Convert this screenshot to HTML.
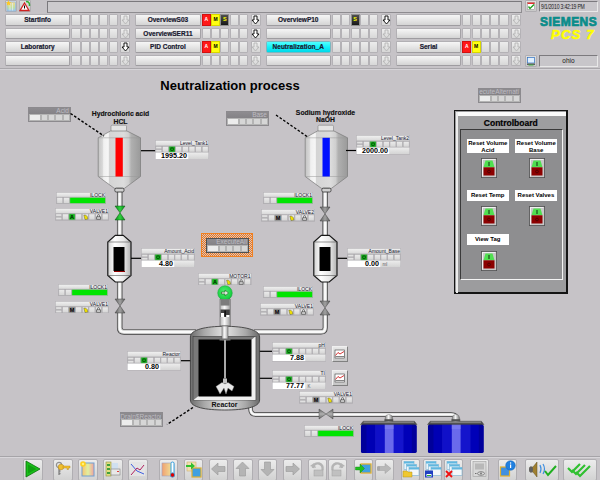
<!DOCTYPE html><html><head><meta charset="utf-8"><style>
*{margin:0;padding:0;box-sizing:border-box}
html,body{width:600px;height:480px;overflow:hidden;background:#c6c3c7;font-family:"Liberation Sans",sans-serif}
div{position:absolute}
svg{position:absolute}
.btn{background:linear-gradient(#f6f6f6,#e6e6e6 50%,#d4d4d4);border:1px solid #b2b0b4;border-bottom-color:#9e9ca0;border-right-color:#a4a2a6;border-radius:1.5px;font-weight:bold;font-size:6.5px;color:#1a1a30;-webkit-text-stroke:0.2px #1a1a30;text-align:center;line-height:9.5px;white-space:nowrap}
.sb{background:linear-gradient(#ececec,#d8d8d8);border:1px solid #b4b2b6;border-radius:1px}
.ar{background:linear-gradient(#eeeeee,#d6d6d6);border:1px solid #b4b2b6;border-radius:1px}
.t{white-space:nowrap}
.c{background:linear-gradient(#e4e4e4,#d8d8d8);border:1px solid #acaaae}
.tb{background:linear-gradient(#ececec,#d2d2d2);border:1px solid #b0aeb2;border-radius:2px}
</style></head><body>
<div style="left:5px;top:0px;width:12px;height:12px;background:linear-gradient(#dedede,#c8c8c8);border:1px solid #b0aeb2;border-radius:1px"></div>
<svg style="position:absolute;left:5px;top:0px" width="12" height="12" viewBox="0 0 12 12"><defs><linearGradient id="ib" x1="0" y1="0" x2="0" y2="1"><stop offset="0" stop-color="#f8d890"/><stop offset="0.6" stop-color="#c0e0a0"/><stop offset="1" stop-color="#a0c8f0"/></linearGradient></defs><rect x="2" y="2" width="8.5" height="9" fill="url(#ib)" stroke="#90b8e0" stroke-width="0.7"/><rect x="4.5" y="3" width="1" height="7.5" fill="#e8f0f0" opacity="0.7"/><rect x="7" y="3" width="1" height="7.5" fill="#e8f0f0" opacity="0.7"/><path d="M3.5 0.3 L4.3 2.2 L6.3 2.3 L4.8 3.5 L5.3 5.5 L3.5 4.4 L1.7 5.5 L2.2 3.5 L0.7 2.3 L2.7 2.2 Z" fill="#ffc820"/></svg>
<div style="left:19px;top:0px;width:12px;height:12px;background:linear-gradient(#dedede,#c8c8c8);border:1px solid #b0aeb2;border-radius:1px"></div>
<svg style="position:absolute;left:19px;top:0px" width="12" height="12" viewBox="0 0 12 12"><path d="M5.5 3 L10 10.5 H1 Z" fill="#fff" stroke="#d02020" stroke-width="1.3"/><rect x="5" y="5.5" width="1" height="3" fill="#000"/><path d="M7 1.5 Q11 1.5 10.5 6" stroke="#30b030" stroke-width="1.5" fill="none"/></svg>
<div style="left:47px;top:0.5px;width:474.5px;height:12px;background:#cccacd;border:1px solid #8e8c90;border-top-color:#7a787c;border-left-color:#7a787c;border-top-width:1.3px;border-left-width:1.3px"></div>
<div style="left:525px;top:0px;width:11.5px;height:12px;background:linear-gradient(#dedede,#c8c8c8);border:1px solid #b0aeb2;border-radius:1px"></div>
<svg style="position:absolute;left:525px;top:0px" width="12" height="12" viewBox="0 0 12 12"><rect x="2.5" y="2.5" width="7" height="7" fill="#fff" stroke="#888" stroke-width="0.5"/><rect x="2.5" y="2.5" width="7" height="1.5" fill="#e03030"/><path d="M3.5 6.5 L5 8.5 L9 4.5" stroke="#20a020" stroke-width="1.3" fill="none"/></svg>
<div style="left:539px;top:1px;width:59px;height:11px;background:#c8c6ca;border:1px solid #7c7a7e;border-right-color:#e8e8e8;border-bottom-color:#e8e8e8"></div>
<div class="t" style="left:540.5px;top:2.5px;font-size:6.4px;line-height:7px;color:#202020;letter-spacing:-0.25px;transform:scaleX(0.8);transform-origin:0 0">9/1/2010 3:42:19 PM</div>
<div style="left:525px;top:55px;width:11.5px;height:12px;background:linear-gradient(#dedede,#c8c8c8);border:1px solid #b0aeb2;border-radius:1px"></div>
<svg style="position:absolute;left:525px;top:55px" width="12" height="12" viewBox="0 0 12 12"><rect x="2.5" y="2.5" width="7" height="5.5" fill="#e0f0ff" stroke="#3070c0" stroke-width="0.7"/><rect x="2" y="8.5" width="8" height="1.5" fill="#606060"/><rect x="3.5" y="9.5" width="5" height="1" fill="#40b040"/></svg>
<div style="left:539px;top:55px;width:59px;height:11.5px;background:#c8c6ca;border:1px solid #7c7a7e;border-right-color:#e8e8e8;border-bottom-color:#e8e8e8;font-size:6.5px;color:#202020;line-height:9.5px;text-align:center">ohio</div>
<div class="t" style="left:540px;top:14.6px;font-size:12px;line-height:14px;font-weight:bold;color:#0a8c8a;letter-spacing:0.45px;-webkit-text-stroke:0.7px #0a8c8a">SIEMENS</div>
<div class="t" style="left:551px;top:27.3px;font-size:13.2px;line-height:15px;font-weight:bold;font-style:italic;color:#ffff00;letter-spacing:1.1px;-webkit-text-stroke:0.5px #ffff00">PCS 7</div>
<div class="btn" style="left:5.0px;top:14px;width:65.3px;height:11.5px;">StartInfo</div>
<div class="sb" style="left:71.3px;top:14px;width:9.3px;height:11.5px;"></div>
<div class="sb" style="left:80.6px;top:14px;width:9.3px;height:11.5px;"></div>
<div class="sb" style="left:89.9px;top:14px;width:9.3px;height:11.5px;"></div>
<div class="sb" style="left:99.2px;top:14px;width:9.3px;height:11.5px;"></div>
<div class="sb" style="left:108.5px;top:14px;width:9.3px;height:11.5px;"></div>
<div class="ar" style="left:120.2px;top:14px;width:10.3px;height:11.5px;"></div>
<svg style="position:absolute;left:119.9px;top:14px" width="11" height="12" viewBox="0 0 11 12"><path d="M4 2h3v4h2L5.5 10 2 6h2z" fill="none" stroke="#b4b4b4" stroke-width="0.9"/></svg>
<div class="btn" style="left:135.3px;top:14px;width:65.3px;height:11.5px;">OverviewS03</div>
<div style="left:201.60000000000002px;top:14px;width:9.3px;height:11.5px;background:#ff1818;border:1px solid #d01010;color:#fff;font-size:5px;font-weight:bold;text-align:center;line-height:9px">A</div>
<div style="left:210.9px;top:14px;width:9.3px;height:11.5px;background:#ffff10;border:1px solid #d8d800;color:#000;font-size:5px;font-weight:bold;text-align:center;line-height:9px">M</div>
<div style="left:220.20000000000002px;top:14px;width:9.3px;height:11.5px;background:linear-gradient(#505050,#181818);border:1px solid #909090;color:#ffff00;font-size:5.5px;font-weight:bold;text-align:center;line-height:9px">S</div>
<div class="sb" style="left:229.5px;top:14px;width:9.3px;height:11.5px;"></div>
<div class="sb" style="left:238.8px;top:14px;width:9.3px;height:11.5px;"></div>
<div class="ar" style="left:250.5px;top:14px;width:10.3px;height:11.5px;"></div>
<svg style="position:absolute;left:250.20000000000002px;top:14px" width="11" height="12" viewBox="0 0 11 12"><path d="M4 2h3v4h2L5.5 10 2 6h2z" fill="#fff" stroke="#000" stroke-width="0.9"/></svg>
<div class="btn" style="left:265.6px;top:14px;width:65.3px;height:11.5px;">OverviewP10</div>
<div class="sb" style="left:331.90000000000003px;top:14px;width:9.3px;height:11.5px;"></div>
<div class="sb" style="left:341.20000000000005px;top:14px;width:9.3px;height:11.5px;"></div>
<div style="left:350.5px;top:14px;width:9.3px;height:11.5px;background:linear-gradient(#505050,#181818);border:1px solid #909090;color:#ffff00;font-size:5.5px;font-weight:bold;text-align:center;line-height:9px">S</div>
<div class="sb" style="left:359.8px;top:14px;width:9.3px;height:11.5px;"></div>
<div class="sb" style="left:369.1px;top:14px;width:9.3px;height:11.5px;"></div>
<div class="ar" style="left:380.8px;top:14px;width:10.3px;height:11.5px;"></div>
<svg style="position:absolute;left:380.5px;top:14px" width="11" height="12" viewBox="0 0 11 12"><path d="M4 2h3v4h2L5.5 10 2 6h2z" fill="#fff" stroke="#000" stroke-width="0.9"/></svg>
<div class="btn" style="left:395.90000000000003px;top:14px;width:65.3px;height:11.5px;"></div>
<div class="sb" style="left:462.20000000000005px;top:14px;width:9.3px;height:11.5px;"></div>
<div class="sb" style="left:471.5px;top:14px;width:9.3px;height:11.5px;"></div>
<div class="sb" style="left:480.80000000000007px;top:14px;width:9.3px;height:11.5px;"></div>
<div class="sb" style="left:490.1px;top:14px;width:9.3px;height:11.5px;"></div>
<div class="sb" style="left:499.40000000000003px;top:14px;width:9.3px;height:11.5px;"></div>
<div class="ar" style="left:511.1px;top:14px;width:10.3px;height:11.5px;"></div>
<svg style="position:absolute;left:510.80000000000007px;top:14px" width="11" height="12" viewBox="0 0 11 12"><path d="M4 2h3v4h2L5.5 10 2 6h2z" fill="none" stroke="#b4b4b4" stroke-width="0.9"/></svg>
<div class="btn" style="left:5.0px;top:27.5px;width:65.3px;height:11.5px;"></div>
<div class="sb" style="left:71.3px;top:27.5px;width:9.3px;height:11.5px;"></div>
<div class="sb" style="left:80.6px;top:27.5px;width:9.3px;height:11.5px;"></div>
<div class="sb" style="left:89.9px;top:27.5px;width:9.3px;height:11.5px;"></div>
<div class="sb" style="left:99.2px;top:27.5px;width:9.3px;height:11.5px;"></div>
<div class="sb" style="left:108.5px;top:27.5px;width:9.3px;height:11.5px;"></div>
<div class="ar" style="left:120.2px;top:27.5px;width:10.3px;height:11.5px;"></div>
<svg style="position:absolute;left:119.9px;top:27.5px" width="11" height="12" viewBox="0 0 11 12"><path d="M4 2h3v4h2L5.5 10 2 6h2z" fill="none" stroke="#b4b4b4" stroke-width="0.9"/></svg>
<div class="btn" style="left:135.3px;top:27.5px;width:65.3px;height:11.5px;">OverviewSER11</div>
<div class="sb" style="left:201.60000000000002px;top:27.5px;width:9.3px;height:11.5px;"></div>
<div class="sb" style="left:210.9px;top:27.5px;width:9.3px;height:11.5px;"></div>
<div class="sb" style="left:220.20000000000002px;top:27.5px;width:9.3px;height:11.5px;"></div>
<div class="sb" style="left:229.5px;top:27.5px;width:9.3px;height:11.5px;"></div>
<div class="sb" style="left:238.8px;top:27.5px;width:9.3px;height:11.5px;"></div>
<div class="ar" style="left:250.5px;top:27.5px;width:10.3px;height:11.5px;"></div>
<svg style="position:absolute;left:250.20000000000002px;top:27.5px" width="11" height="12" viewBox="0 0 11 12"><path d="M4 2h3v4h2L5.5 10 2 6h2z" fill="#fff" stroke="#000" stroke-width="0.9"/></svg>
<div class="btn" style="left:265.6px;top:27.5px;width:65.3px;height:11.5px;"></div>
<div class="sb" style="left:331.90000000000003px;top:27.5px;width:9.3px;height:11.5px;"></div>
<div class="sb" style="left:341.20000000000005px;top:27.5px;width:9.3px;height:11.5px;"></div>
<div class="sb" style="left:350.5px;top:27.5px;width:9.3px;height:11.5px;"></div>
<div class="sb" style="left:359.8px;top:27.5px;width:9.3px;height:11.5px;"></div>
<div class="sb" style="left:369.1px;top:27.5px;width:9.3px;height:11.5px;"></div>
<div class="ar" style="left:380.8px;top:27.5px;width:10.3px;height:11.5px;"></div>
<svg style="position:absolute;left:380.5px;top:27.5px" width="11" height="12" viewBox="0 0 11 12"><path d="M4 2h3v4h2L5.5 10 2 6h2z" fill="none" stroke="#b4b4b4" stroke-width="0.9"/></svg>
<div class="btn" style="left:395.90000000000003px;top:27.5px;width:65.3px;height:11.5px;"></div>
<div class="sb" style="left:462.20000000000005px;top:27.5px;width:9.3px;height:11.5px;"></div>
<div class="sb" style="left:471.5px;top:27.5px;width:9.3px;height:11.5px;"></div>
<div class="sb" style="left:480.80000000000007px;top:27.5px;width:9.3px;height:11.5px;"></div>
<div class="sb" style="left:490.1px;top:27.5px;width:9.3px;height:11.5px;"></div>
<div class="sb" style="left:499.40000000000003px;top:27.5px;width:9.3px;height:11.5px;"></div>
<div class="ar" style="left:511.1px;top:27.5px;width:10.3px;height:11.5px;"></div>
<svg style="position:absolute;left:510.80000000000007px;top:27.5px" width="11" height="12" viewBox="0 0 11 12"><path d="M4 2h3v4h2L5.5 10 2 6h2z" fill="none" stroke="#b4b4b4" stroke-width="0.9"/></svg>
<div class="btn" style="left:5.0px;top:41px;width:65.3px;height:11.5px;">Laboratory</div>
<div class="sb" style="left:71.3px;top:41px;width:9.3px;height:11.5px;"></div>
<div class="sb" style="left:80.6px;top:41px;width:9.3px;height:11.5px;"></div>
<div class="sb" style="left:89.9px;top:41px;width:9.3px;height:11.5px;"></div>
<div class="sb" style="left:99.2px;top:41px;width:9.3px;height:11.5px;"></div>
<div class="sb" style="left:108.5px;top:41px;width:9.3px;height:11.5px;"></div>
<div class="ar" style="left:120.2px;top:41px;width:10.3px;height:11.5px;"></div>
<svg style="position:absolute;left:119.9px;top:41px" width="11" height="12" viewBox="0 0 11 12"><path d="M4 2h3v4h2L5.5 10 2 6h2z" fill="#fff" stroke="#000" stroke-width="0.9"/></svg>
<div class="btn" style="left:135.3px;top:41px;width:65.3px;height:11.5px;">PID Control</div>
<div style="left:201.60000000000002px;top:41px;width:9.3px;height:11.5px;background:#ff1818;border:1px solid #d01010;color:#fff;font-size:5px;font-weight:bold;text-align:center;line-height:9px">A</div>
<div style="left:210.9px;top:41px;width:9.3px;height:11.5px;background:#ffff10;border:1px solid #d8d800;color:#000;font-size:5px;font-weight:bold;text-align:center;line-height:9px">M</div>
<div class="sb" style="left:220.20000000000002px;top:41px;width:9.3px;height:11.5px;"></div>
<div class="sb" style="left:229.5px;top:41px;width:9.3px;height:11.5px;"></div>
<div class="sb" style="left:238.8px;top:41px;width:9.3px;height:11.5px;"></div>
<div class="ar" style="left:250.5px;top:41px;width:10.3px;height:11.5px;"></div>
<svg style="position:absolute;left:250.20000000000002px;top:41px" width="11" height="12" viewBox="0 0 11 12"><path d="M4 2h3v4h2L5.5 10 2 6h2z" fill="none" stroke="#b4b4b4" stroke-width="0.9"/></svg>
<div class="btn" style="left:265.6px;top:41px;width:65.3px;height:11.5px;background:linear-gradient(#50ffff,#10f0f8 55%,#00d8e8);border-color:#7ab8c0">Neutralization_A</div>
<div class="sb" style="left:331.90000000000003px;top:41px;width:9.3px;height:11.5px;"></div>
<div class="sb" style="left:341.20000000000005px;top:41px;width:9.3px;height:11.5px;"></div>
<div class="sb" style="left:350.5px;top:41px;width:9.3px;height:11.5px;"></div>
<div class="sb" style="left:359.8px;top:41px;width:9.3px;height:11.5px;"></div>
<div class="sb" style="left:369.1px;top:41px;width:9.3px;height:11.5px;"></div>
<div class="ar" style="left:380.8px;top:41px;width:10.3px;height:11.5px;"></div>
<svg style="position:absolute;left:380.5px;top:41px" width="11" height="12" viewBox="0 0 11 12"><path d="M4 2h3v4h2L5.5 10 2 6h2z" fill="none" stroke="#b4b4b4" stroke-width="0.9"/></svg>
<div class="btn" style="left:395.90000000000003px;top:41px;width:65.3px;height:11.5px;">Serial</div>
<div style="left:462.20000000000005px;top:41px;width:9.3px;height:11.5px;background:#ff1818;border:1px solid #d01010;color:#fff;font-size:5px;font-weight:bold;text-align:center;line-height:9px">A</div>
<div style="left:471.5px;top:41px;width:9.3px;height:11.5px;background:#ffff10;border:1px solid #d8d800;color:#000;font-size:5px;font-weight:bold;text-align:center;line-height:9px">M</div>
<div class="sb" style="left:480.80000000000007px;top:41px;width:9.3px;height:11.5px;"></div>
<div class="sb" style="left:490.1px;top:41px;width:9.3px;height:11.5px;"></div>
<div class="sb" style="left:499.40000000000003px;top:41px;width:9.3px;height:11.5px;"></div>
<div class="ar" style="left:511.1px;top:41px;width:10.3px;height:11.5px;"></div>
<svg style="position:absolute;left:510.80000000000007px;top:41px" width="11" height="12" viewBox="0 0 11 12"><path d="M4 2h3v4h2L5.5 10 2 6h2z" fill="none" stroke="#b4b4b4" stroke-width="0.9"/></svg>
<div class="btn" style="left:5.0px;top:54.5px;width:65.3px;height:11.5px;"></div>
<div class="sb" style="left:71.3px;top:54.5px;width:9.3px;height:11.5px;"></div>
<div class="sb" style="left:80.6px;top:54.5px;width:9.3px;height:11.5px;"></div>
<div class="sb" style="left:89.9px;top:54.5px;width:9.3px;height:11.5px;"></div>
<div class="sb" style="left:99.2px;top:54.5px;width:9.3px;height:11.5px;"></div>
<div class="sb" style="left:108.5px;top:54.5px;width:9.3px;height:11.5px;"></div>
<div class="ar" style="left:120.2px;top:54.5px;width:10.3px;height:11.5px;"></div>
<svg style="position:absolute;left:119.9px;top:54.5px" width="11" height="12" viewBox="0 0 11 12"><path d="M4 2h3v4h2L5.5 10 2 6h2z" fill="none" stroke="#b4b4b4" stroke-width="0.9"/></svg>
<div class="btn" style="left:135.3px;top:54.5px;width:65.3px;height:11.5px;"></div>
<div class="sb" style="left:201.60000000000002px;top:54.5px;width:9.3px;height:11.5px;"></div>
<div class="sb" style="left:210.9px;top:54.5px;width:9.3px;height:11.5px;"></div>
<div class="sb" style="left:220.20000000000002px;top:54.5px;width:9.3px;height:11.5px;"></div>
<div class="sb" style="left:229.5px;top:54.5px;width:9.3px;height:11.5px;"></div>
<div class="sb" style="left:238.8px;top:54.5px;width:9.3px;height:11.5px;"></div>
<div class="ar" style="left:250.5px;top:54.5px;width:10.3px;height:11.5px;"></div>
<svg style="position:absolute;left:250.20000000000002px;top:54.5px" width="11" height="12" viewBox="0 0 11 12"><path d="M4 2h3v4h2L5.5 10 2 6h2z" fill="none" stroke="#b4b4b4" stroke-width="0.9"/></svg>
<div class="btn" style="left:265.6px;top:54.5px;width:65.3px;height:11.5px;"></div>
<div class="sb" style="left:331.90000000000003px;top:54.5px;width:9.3px;height:11.5px;"></div>
<div class="sb" style="left:341.20000000000005px;top:54.5px;width:9.3px;height:11.5px;"></div>
<div class="sb" style="left:350.5px;top:54.5px;width:9.3px;height:11.5px;"></div>
<div class="sb" style="left:359.8px;top:54.5px;width:9.3px;height:11.5px;"></div>
<div class="sb" style="left:369.1px;top:54.5px;width:9.3px;height:11.5px;"></div>
<div class="ar" style="left:380.8px;top:54.5px;width:10.3px;height:11.5px;"></div>
<svg style="position:absolute;left:380.5px;top:54.5px" width="11" height="12" viewBox="0 0 11 12"><path d="M4 2h3v4h2L5.5 10 2 6h2z" fill="none" stroke="#b4b4b4" stroke-width="0.9"/></svg>
<div class="btn" style="left:395.90000000000003px;top:54.5px;width:65.3px;height:11.5px;"></div>
<div class="sb" style="left:462.20000000000005px;top:54.5px;width:9.3px;height:11.5px;"></div>
<div class="sb" style="left:471.5px;top:54.5px;width:9.3px;height:11.5px;"></div>
<div class="sb" style="left:480.80000000000007px;top:54.5px;width:9.3px;height:11.5px;"></div>
<div class="sb" style="left:490.1px;top:54.5px;width:9.3px;height:11.5px;"></div>
<div class="sb" style="left:499.40000000000003px;top:54.5px;width:9.3px;height:11.5px;"></div>
<div class="ar" style="left:511.1px;top:54.5px;width:10.3px;height:11.5px;"></div>
<svg style="position:absolute;left:510.80000000000007px;top:54.5px" width="11" height="12" viewBox="0 0 11 12"><path d="M4 2h3v4h2L5.5 10 2 6h2z" fill="none" stroke="#b4b4b4" stroke-width="0.9"/></svg>
<div style="left:0px;top:67.5px;width:600px;height:1px;background:#a9a7ab"></div>
<div style="left:0px;top:68.5px;width:600px;height:1px;background:#d6d4d8"></div>
<div class="t" style="left:160.3px;top:78px;font-size:13px;line-height:15px;font-weight:bold;color:#000">Neutralization process</div>
<svg width="0" height="0" style="position:absolute"><defs><linearGradient id="gc" x1="0" y1="0" x2="0" y2="1"><stop offset="0" stop-color="#ececec"/><stop offset="1" stop-color="#d4d4d4"/></linearGradient><linearGradient id="gt" x1="0" y1="0" x2="0" y2="1"><stop offset="0" stop-color="#f2f2f2"/><stop offset="1" stop-color="#d8d8d8"/></linearGradient></defs></svg>
<svg style="position:absolute;left:0px;top:0px" width="600" height="480" viewBox="0 0 600 480"><path d="M119.7 190 V206.5" fill="none" stroke="#3c3c3c" stroke-width="5.5" stroke-linejoin="round"/><path d="M119.7 190 V206.5" fill="none" stroke="#c8c8c8" stroke-width="4.1" stroke-linejoin="round"/><path d="M119.7 190 V206.5" fill="none" stroke="#fafafa" stroke-width="2.31" stroke-linejoin="round"/></svg>
<svg style="position:absolute;left:0px;top:0px" width="600" height="480" viewBox="0 0 600 480"><path d="M119.7 219.5 V236" fill="none" stroke="#3c3c3c" stroke-width="5.5" stroke-linejoin="round"/><path d="M119.7 219.5 V236" fill="none" stroke="#c8c8c8" stroke-width="4.1" stroke-linejoin="round"/><path d="M119.7 219.5 V236" fill="none" stroke="#fafafa" stroke-width="2.31" stroke-linejoin="round"/></svg>
<svg style="position:absolute;left:0px;top:0px" width="600" height="480" viewBox="0 0 600 480"><path d="M119.7 281 V299.5" fill="none" stroke="#3c3c3c" stroke-width="5.5" stroke-linejoin="round"/><path d="M119.7 281 V299.5" fill="none" stroke="#c8c8c8" stroke-width="4.1" stroke-linejoin="round"/><path d="M119.7 281 V299.5" fill="none" stroke="#fafafa" stroke-width="2.31" stroke-linejoin="round"/></svg>
<svg style="position:absolute;left:0px;top:0px" width="600" height="480" viewBox="0 0 600 480"><path d="M119.7 312 V327.7 Q119.7 331.9 124 331.9 H196" fill="none" stroke="#3c3c3c" stroke-width="5.5" stroke-linejoin="round"/><path d="M119.7 312 V327.7 Q119.7 331.9 124 331.9 H196" fill="none" stroke="#c8c8c8" stroke-width="4.1" stroke-linejoin="round"/><path d="M119.7 312 V327.7 Q119.7 331.9 124 331.9 H196" fill="none" stroke="#fafafa" stroke-width="2.31" stroke-linejoin="round"/></svg>
<svg style="position:absolute;left:0px;top:0px" width="600" height="480" viewBox="0 0 600 480"><path d="M325.2 190 V207.5" fill="none" stroke="#3c3c3c" stroke-width="5.5" stroke-linejoin="round"/><path d="M325.2 190 V207.5" fill="none" stroke="#c8c8c8" stroke-width="4.1" stroke-linejoin="round"/><path d="M325.2 190 V207.5" fill="none" stroke="#fafafa" stroke-width="2.31" stroke-linejoin="round"/></svg>
<svg style="position:absolute;left:0px;top:0px" width="600" height="480" viewBox="0 0 600 480"><path d="M325.2 220.5 V236" fill="none" stroke="#3c3c3c" stroke-width="5.5" stroke-linejoin="round"/><path d="M325.2 220.5 V236" fill="none" stroke="#c8c8c8" stroke-width="4.1" stroke-linejoin="round"/><path d="M325.2 220.5 V236" fill="none" stroke="#fafafa" stroke-width="2.31" stroke-linejoin="round"/></svg>
<svg style="position:absolute;left:0px;top:0px" width="600" height="480" viewBox="0 0 600 480"><path d="M325.2 281 V301" fill="none" stroke="#3c3c3c" stroke-width="5.5" stroke-linejoin="round"/><path d="M325.2 281 V301" fill="none" stroke="#c8c8c8" stroke-width="4.1" stroke-linejoin="round"/><path d="M325.2 281 V301" fill="none" stroke="#fafafa" stroke-width="2.31" stroke-linejoin="round"/></svg>
<svg style="position:absolute;left:0px;top:0px" width="600" height="480" viewBox="0 0 600 480"><path d="M325.2 314 V327.7 Q325.2 331.9 321 331.9 H254" fill="none" stroke="#3c3c3c" stroke-width="5" stroke-linejoin="round"/><path d="M325.2 314 V327.7 Q325.2 331.9 321 331.9 H254" fill="none" stroke="#c8c8c8" stroke-width="3.6" stroke-linejoin="round"/><path d="M325.2 314 V327.7 Q325.2 331.9 321 331.9 H254" fill="none" stroke="#fafafa" stroke-width="2.1" stroke-linejoin="round"/></svg>
<svg style="position:absolute;left:0px;top:0px" width="600" height="480" viewBox="0 0 600 480"><path d="M250.6 400 V409 Q250.6 414.5 256 414.5 H319.5" fill="none" stroke="#3c3c3c" stroke-width="4.6" stroke-linejoin="round"/><path d="M250.6 400 V409 Q250.6 414.5 256 414.5 H319.5" fill="none" stroke="#c8c8c8" stroke-width="3.1999999999999997" stroke-linejoin="round"/><path d="M250.6 400 V409 Q250.6 414.5 256 414.5 H319.5" fill="none" stroke="#fafafa" stroke-width="1.9319999999999997" stroke-linejoin="round"/></svg>
<svg style="position:absolute;left:0px;top:0px" width="600" height="480" viewBox="0 0 600 480"><path d="M332.5 414.5 H451 Q456.7 414.5 456.7 419 V421" fill="none" stroke="#3c3c3c" stroke-width="4.6" stroke-linejoin="round"/><path d="M332.5 414.5 H451 Q456.7 414.5 456.7 419 V421" fill="none" stroke="#c8c8c8" stroke-width="3.1999999999999997" stroke-linejoin="round"/><path d="M332.5 414.5 H451 Q456.7 414.5 456.7 419 V421" fill="none" stroke="#fafafa" stroke-width="1.9319999999999997" stroke-linejoin="round"/></svg>
<svg style="position:absolute;left:96px;top:122px" width="48" height="72" viewBox="0 0 48 72"><defs><linearGradient id="tg98" x1="0" x2="1">
<stop offset="0" stop-color="#c4c4c4"/><stop offset="0.1" stop-color="#d8d8d8"/><stop offset="0.13" stop-color="#f0f0f0"/><stop offset="0.24" stop-color="#f6f6f6"/><stop offset="0.26" stop-color="#d4d4d4"/>
<stop offset="0.6" stop-color="#dcdcdc"/><stop offset="0.72" stop-color="#cfcfcf"/><stop offset="0.78" stop-color="#b0b0b0"/><stop offset="1" stop-color="#9a9a9a"/></linearGradient></defs>
<rect x="15" y="3.2" width="15.5" height="6.3" rx="1.2" fill="#e4e4e4" stroke="#808080" stroke-width="0.6"/>
<path d="M14.5 9 L31 9 L44.5 15.8 L44.5 54.5 L28.5 66.3 L18.3 66.3 L2.2 54.5 L2.2 15.8 Z" fill="url(#tg98)" stroke="#787878" stroke-width="0.7"/>
<line x1="2.2" y1="15.8" x2="44.5" y2="15.8" stroke="#989898" stroke-width="0.5"/>
<line x1="2.2" y1="54.5" x2="44.5" y2="54.5" stroke="#989898" stroke-width="0.5"/>
<rect x="19.5" y="15.8" width="7.3" height="38.7" fill="#ff0000"/>
<rect x="18.8" y="66.2" width="9.2" height="3.8" rx="1.5" fill="#d0d0d0" stroke="#404040" stroke-width="0.9"/></svg>
<svg style="position:absolute;left:302.5px;top:122px" width="48" height="72" viewBox="0 0 48 72"><defs><linearGradient id="tg304" x1="0" x2="1">
<stop offset="0" stop-color="#c4c4c4"/><stop offset="0.1" stop-color="#d8d8d8"/><stop offset="0.13" stop-color="#f0f0f0"/><stop offset="0.24" stop-color="#f6f6f6"/><stop offset="0.26" stop-color="#d4d4d4"/>
<stop offset="0.6" stop-color="#dcdcdc"/><stop offset="0.72" stop-color="#cfcfcf"/><stop offset="0.78" stop-color="#b0b0b0"/><stop offset="1" stop-color="#9a9a9a"/></linearGradient></defs>
<rect x="15" y="3.2" width="15.5" height="6.3" rx="1.2" fill="#e4e4e4" stroke="#808080" stroke-width="0.6"/>
<path d="M14.5 9 L31 9 L44.5 15.8 L44.5 54.5 L28.5 66.3 L18.3 66.3 L2.2 54.5 L2.2 15.8 Z" fill="url(#tg304)" stroke="#787878" stroke-width="0.7"/>
<line x1="2.2" y1="15.8" x2="44.5" y2="15.8" stroke="#989898" stroke-width="0.5"/>
<line x1="2.2" y1="54.5" x2="44.5" y2="54.5" stroke="#989898" stroke-width="0.5"/>
<rect x="19.5" y="15.8" width="7.3" height="38.7" fill="#0010ff"/>
<rect x="18.8" y="66.2" width="9.2" height="3.8" rx="1.5" fill="#d0d0d0" stroke="#404040" stroke-width="0.9"/></svg>
<svg style="position:absolute;left:107px;top:233px" width="26" height="52" viewBox="0 0 26 52"><defs><linearGradient id="fg107" x1="0" x2="1"><stop offset="0" stop-color="#d0d0d0"/><stop offset="0.3" stop-color="#ffffff"/><stop offset="0.7" stop-color="#e8e8e8"/><stop offset="1" stop-color="#b0b0b0"/></linearGradient></defs>
<path d="M8.3 2.3 H16.2 L24 9 V42.5 L16.2 49 H8.3 L0.8 42.5 V9 Z" fill="url(#fg107)" stroke="#181818" stroke-width="1.2"/>
<line x1="1" y1="9" x2="24" y2="9" stroke="#505050" stroke-width="0.6"/>
<line x1="1" y1="42.5" x2="24" y2="42.5" stroke="#505050" stroke-width="0.6"/>
<rect x="6.5" y="14" width="11" height="24" fill="#000"/></svg>
<svg style="position:absolute;left:313px;top:233px" width="26" height="52" viewBox="0 0 26 52"><defs><linearGradient id="fg313" x1="0" x2="1"><stop offset="0" stop-color="#d0d0d0"/><stop offset="0.3" stop-color="#ffffff"/><stop offset="0.7" stop-color="#e8e8e8"/><stop offset="1" stop-color="#b0b0b0"/></linearGradient></defs>
<path d="M8.3 2.3 H16.2 L24 9 V42.5 L16.2 49 H8.3 L0.8 42.5 V9 Z" fill="url(#fg313)" stroke="#181818" stroke-width="1.2"/>
<line x1="1" y1="9" x2="24" y2="9" stroke="#505050" stroke-width="0.6"/>
<line x1="1" y1="42.5" x2="24" y2="42.5" stroke="#505050" stroke-width="0.6"/>
<rect x="6.5" y="14" width="11" height="24" fill="#000"/></svg>
<div style="left:113.5px;top:270.5px;width:11px;height:1px;background:#900000"></div>
<svg style="position:absolute;left:113.8px;top:205px" width="12" height="16" viewBox="0 0 12 16"><defs><linearGradient id="vg113205" x1="0" x2="1"><stop offset="0" stop-color="#0a9018"/><stop offset="0.5" stop-color="#30d040"/><stop offset="1" stop-color="#0a9018"/></linearGradient></defs><path d="M1 1 H11 L6 7.8 Z M1 15 H11 L6 7.8 Z" fill="url(#vg113205)" stroke="#0a5010" stroke-width="0.5"/></svg>
<svg style="position:absolute;left:113.8px;top:298px" width="12" height="16" viewBox="0 0 12 16"><defs><linearGradient id="vg113298" x1="0" x2="1"><stop offset="0" stop-color="#606060"/><stop offset="0.5" stop-color="#a0a0a0"/><stop offset="1" stop-color="#606060"/></linearGradient></defs><path d="M1 1 H11 L6 7.8 Z M1 15 H11 L6 7.8 Z" fill="url(#vg113298)" stroke="#404040" stroke-width="0.5"/></svg>
<svg style="position:absolute;left:319.3px;top:206px" width="12" height="16" viewBox="0 0 12 16"><defs><linearGradient id="vg319206" x1="0" x2="1"><stop offset="0" stop-color="#606060"/><stop offset="0.5" stop-color="#a0a0a0"/><stop offset="1" stop-color="#606060"/></linearGradient></defs><path d="M1 1 H11 L6 7.8 Z M1 15 H11 L6 7.8 Z" fill="url(#vg319206)" stroke="#404040" stroke-width="0.5"/></svg>
<svg style="position:absolute;left:319.3px;top:299.5px" width="12" height="16" viewBox="0 0 12 16"><defs><linearGradient id="vg319299" x1="0" x2="1"><stop offset="0" stop-color="#606060"/><stop offset="0.5" stop-color="#a0a0a0"/><stop offset="1" stop-color="#606060"/></linearGradient></defs><path d="M1 1 H11 L6 7.8 Z M1 15 H11 L6 7.8 Z" fill="url(#vg319299)" stroke="#404040" stroke-width="0.5"/></svg>
<svg style="position:absolute;left:318px;top:408px" width="16" height="12" viewBox="0 0 16 12"><defs><linearGradient id="hv" x1="0" y1="0" x2="0" y2="1"><stop offset="0" stop-color="#606060"/><stop offset="0.5" stop-color="#b0b0b0"/><stop offset="1" stop-color="#606060"/></linearGradient></defs><path d="M1 1 V11 L8 6 Z M15 1 V11 L8 6 Z" fill="url(#hv)" stroke="#505050" stroke-width="0.5"/></svg>
<div class="t" style="left:90.5px;top:110.4px;width:60px;text-align:center;font-size:6.8px;font-weight:bold;color:#101010;line-height:7.4px;-webkit-text-stroke:0.15px #101010">Hydrochloric acid<br>HCL</div>
<div class="t" style="left:295.5px;top:108.8px;width:60px;text-align:center;font-size:6.8px;font-weight:bold;color:#101010;line-height:7.4px;-webkit-text-stroke:0.15px #101010">Sodium hydroxide<br>NaOH</div>
<div style="left:28px;top:107px;width:42.5px;height:14.5px;background:#c8c8c8;border:1px solid #8c8a8e"></div>
<div style="left:28.5px;top:107.5px;width:41.5px;height:6.5px;background:linear-gradient(#8e8c90,#848286)"></div>
<div class="t" style="left:28px;top:107.3px;width:41.0px;height:7px;font-size:6.5px;line-height:7px;color:#bebcc2;text-align:right;overflow:hidden">Acid</div>
<div style="left:28.5px;top:114px;width:12px;height:7px;background:#ececec;border:1px solid #b4b4b4"></div>
<div style="left:40.5px;top:114px;width:7.375px;height:7px;background:#d6d6d6;border:1px solid #b4b4b4"></div>
<div style="left:47.875px;top:114px;width:7.375px;height:7px;background:#d6d6d6;border:1px solid #b4b4b4"></div>
<div style="left:55.25px;top:114px;width:7.375px;height:7px;background:#d6d6d6;border:1px solid #b4b4b4"></div>
<div style="left:62.625px;top:114px;width:7.375px;height:7px;background:#d6d6d6;border:1px solid #b4b4b4"></div>
<div style="left:226px;top:111px;width:42.5px;height:14.5px;background:#c8c8c8;border:1px solid #8c8a8e"></div>
<div style="left:226.5px;top:111.5px;width:41.5px;height:6.5px;background:linear-gradient(#8e8c90,#848286)"></div>
<div class="t" style="left:226px;top:111.3px;width:41.0px;height:7px;font-size:6.5px;line-height:7px;color:#bebcc2;text-align:right;overflow:hidden">Base</div>
<div style="left:226.5px;top:118px;width:12px;height:7px;background:#ececec;border:1px solid #b4b4b4"></div>
<div style="left:238.5px;top:118px;width:7.375px;height:7px;background:#d6d6d6;border:1px solid #b4b4b4"></div>
<div style="left:245.875px;top:118px;width:7.375px;height:7px;background:#d6d6d6;border:1px solid #b4b4b4"></div>
<div style="left:253.25px;top:118px;width:7.375px;height:7px;background:#d6d6d6;border:1px solid #b4b4b4"></div>
<div style="left:260.625px;top:118px;width:7.375px;height:7px;background:#d6d6d6;border:1px solid #b4b4b4"></div>
<svg style="position:absolute;left:0px;top:0px" width="600" height="480" viewBox="0 0 600 480"><line x1="70.5" y1="113.5" x2="104" y2="136" stroke="#000" stroke-width="1.4" stroke-dasharray="2.6,1.8"/></svg>
<svg style="position:absolute;left:0px;top:0px" width="600" height="480" viewBox="0 0 600 480"><line x1="276" y1="115" x2="307" y2="136.5" stroke="#000" stroke-width="1.4" stroke-dasharray="2.6,1.8"/></svg>
<svg style="position:absolute;left:0px;top:0px" width="600" height="480" viewBox="0 0 600 480"><line x1="141" y1="150.7" x2="155" y2="150.7" stroke="#000" stroke-width="1.2"/></svg>
<svg style="position:absolute;left:0px;top:0px" width="600" height="480" viewBox="0 0 600 480"><line x1="346" y1="150.5" x2="357" y2="150.5" stroke="#000" stroke-width="1.2"/></svg>
<svg style="position:absolute;left:0px;top:0px" width="600" height="480" viewBox="0 0 600 480"><line x1="131" y1="258.3" x2="141" y2="258.3" stroke="#000" stroke-width="1.2"/></svg>
<svg style="position:absolute;left:0px;top:0px" width="600" height="480" viewBox="0 0 600 480"><line x1="337.5" y1="258.3" x2="347" y2="258.3" stroke="#000" stroke-width="1.2"/></svg>
<svg style="position:absolute;left:0px;top:0px" width="600" height="480" viewBox="0 0 600 480"><line x1="180" y1="360.7" x2="191" y2="360.7" stroke="#000" stroke-width="1.2"/></svg>
<svg style="position:absolute;left:0px;top:0px" width="600" height="480" viewBox="0 0 600 480"><line x1="259" y1="351.3" x2="272" y2="351.3" stroke="#000" stroke-width="1.2"/></svg>
<svg style="position:absolute;left:0px;top:0px" width="600" height="480" viewBox="0 0 600 480"><line x1="259" y1="378.3" x2="272" y2="378.3" stroke="#000" stroke-width="1.2"/></svg>
<svg style="position:absolute;left:154.7px;top:139.7px" width="54" height="19.5" viewBox="0 0 54 19.5"><rect x="0.3" y="0.3" width="53.4" height="18.9" fill="#c6c4c8" stroke="#b0aeb2" stroke-width="0.6"/><rect x="0.3" y="0.3" width="53.4" height="5.5" fill="url(#gt)" stroke="#b8b6ba" stroke-width="0.6"/><text x="53" y="5.2" font-family="Liberation Sans" font-size="5" text-anchor="end" fill="#202030">Level_Tank1</text><rect x="0.8" y="6.3999999999999995" width="6.025" height="2.55" fill="url(#gc)" stroke="#a8a6aa" stroke-width="0.6"/><rect x="0.8" y="9.55" width="6.025" height="2.55" fill="url(#gc)" stroke="#a8a6aa" stroke-width="0.6"/><rect x="7.425" y="6.3999999999999995" width="6.025" height="5.7" fill="url(#gc)" stroke="#a8a6aa" stroke-width="0.6"/><rect x="14.05" y="6.3999999999999995" width="6.025" height="5.7" fill="#10a818" stroke="#80b080" stroke-width="0.6"/><circle cx="17.0625" cy="9.25" r="1.5" fill="none" stroke="#002800" stroke-width="0.6"/><rect x="20.675" y="6.3999999999999995" width="6.025" height="5.7" fill="url(#gc)" stroke="#a8a6aa" stroke-width="0.6"/><rect x="27.3" y="6.3999999999999995" width="6.025" height="5.7" fill="url(#gc)" stroke="#a8a6aa" stroke-width="0.6"/><rect x="33.925" y="6.3999999999999995" width="6.025" height="5.7" fill="url(#gc)" stroke="#a8a6aa" stroke-width="0.6"/><rect x="40.55" y="6.3999999999999995" width="6.025" height="5.7" fill="url(#gc)" stroke="#a8a6aa" stroke-width="0.6"/><rect x="47.175" y="6.3999999999999995" width="6.025" height="5.7" fill="url(#gc)" stroke="#a8a6aa" stroke-width="0.6"/><rect x="0.6" y="12.6" width="33" height="6.4" fill="#fff"/><rect x="33.6" y="12.6" width="19.799999999999997" height="6.4" fill="url(#gc)"/><text x="32" y="18.3" font-family="Liberation Sans" font-weight="bold" font-size="7.2" text-anchor="end" fill="#000">1995.20</text></svg>
<svg style="position:absolute;left:356.3px;top:135.3px" width="54" height="19.5" viewBox="0 0 54 19.5"><rect x="0.3" y="0.3" width="53.4" height="18.9" fill="#c6c4c8" stroke="#b0aeb2" stroke-width="0.6"/><rect x="0.3" y="0.3" width="53.4" height="5.5" fill="url(#gt)" stroke="#b8b6ba" stroke-width="0.6"/><text x="53" y="5.2" font-family="Liberation Sans" font-size="5" text-anchor="end" fill="#202030">Level_Tank2</text><rect x="0.8" y="6.3999999999999995" width="6.025" height="2.55" fill="url(#gc)" stroke="#a8a6aa" stroke-width="0.6"/><rect x="0.8" y="9.55" width="6.025" height="2.55" fill="url(#gc)" stroke="#a8a6aa" stroke-width="0.6"/><rect x="7.425" y="6.3999999999999995" width="6.025" height="5.7" fill="url(#gc)" stroke="#a8a6aa" stroke-width="0.6"/><rect x="14.05" y="6.3999999999999995" width="6.025" height="5.7" fill="#10a818" stroke="#80b080" stroke-width="0.6"/><circle cx="17.0625" cy="9.25" r="1.5" fill="none" stroke="#002800" stroke-width="0.6"/><rect x="20.675" y="6.3999999999999995" width="6.025" height="5.7" fill="url(#gc)" stroke="#a8a6aa" stroke-width="0.6"/><rect x="27.3" y="6.3999999999999995" width="6.025" height="5.7" fill="url(#gc)" stroke="#a8a6aa" stroke-width="0.6"/><rect x="33.925" y="6.3999999999999995" width="6.025" height="5.7" fill="url(#gc)" stroke="#a8a6aa" stroke-width="0.6"/><rect x="40.55" y="6.3999999999999995" width="6.025" height="5.7" fill="url(#gc)" stroke="#a8a6aa" stroke-width="0.6"/><rect x="47.175" y="6.3999999999999995" width="6.025" height="5.7" fill="url(#gc)" stroke="#a8a6aa" stroke-width="0.6"/><rect x="0.6" y="12.6" width="33" height="6.4" fill="#fff"/><rect x="33.6" y="12.6" width="19.799999999999997" height="6.4" fill="url(#gc)"/><text x="32" y="18.3" font-family="Liberation Sans" font-weight="bold" font-size="7.2" text-anchor="end" fill="#000">2000.00</text></svg>
<svg style="position:absolute;left:140.8px;top:247.5px" width="54" height="19.5" viewBox="0 0 54 19.5"><rect x="0.3" y="0.3" width="53.4" height="18.9" fill="#c6c4c8" stroke="#b0aeb2" stroke-width="0.6"/><rect x="0.3" y="0.3" width="53.4" height="5.5" fill="url(#gt)" stroke="#b8b6ba" stroke-width="0.6"/><text x="53" y="5.2" font-family="Liberation Sans" font-size="5" text-anchor="end" fill="#202030">Amount_Acid</text><rect x="0.8" y="6.3999999999999995" width="6.025" height="2.55" fill="url(#gc)" stroke="#a8a6aa" stroke-width="0.6"/><rect x="0.8" y="9.55" width="6.025" height="2.55" fill="url(#gc)" stroke="#a8a6aa" stroke-width="0.6"/><rect x="7.425" y="6.3999999999999995" width="6.025" height="5.7" fill="url(#gc)" stroke="#a8a6aa" stroke-width="0.6"/><rect x="14.05" y="6.3999999999999995" width="6.025" height="5.7" fill="#10a818" stroke="#80b080" stroke-width="0.6"/><circle cx="17.0625" cy="9.25" r="1.5" fill="none" stroke="#002800" stroke-width="0.6"/><rect x="20.675" y="6.3999999999999995" width="6.025" height="5.7" fill="url(#gc)" stroke="#a8a6aa" stroke-width="0.6"/><rect x="27.3" y="6.3999999999999995" width="6.025" height="5.7" fill="url(#gc)" stroke="#a8a6aa" stroke-width="0.6"/><rect x="33.925" y="6.3999999999999995" width="6.025" height="5.7" fill="url(#gc)" stroke="#a8a6aa" stroke-width="0.6"/><rect x="40.55" y="6.3999999999999995" width="6.025" height="5.7" fill="url(#gc)" stroke="#a8a6aa" stroke-width="0.6"/><rect x="47.175" y="6.3999999999999995" width="6.025" height="5.7" fill="url(#gc)" stroke="#a8a6aa" stroke-width="0.6"/><rect x="0.6" y="12.6" width="33" height="6.4" fill="#fff"/><rect x="33.6" y="12.6" width="19.799999999999997" height="6.4" fill="url(#gc)"/><text x="32" y="18.3" font-family="Liberation Sans" font-weight="bold" font-size="7.2" text-anchor="end" fill="#000">4.80</text></svg>
<svg style="position:absolute;left:346.8px;top:247.5px" width="54" height="19.5" viewBox="0 0 54 19.5"><rect x="0.3" y="0.3" width="53.4" height="18.9" fill="#c6c4c8" stroke="#b0aeb2" stroke-width="0.6"/><rect x="0.3" y="0.3" width="53.4" height="5.5" fill="url(#gt)" stroke="#b8b6ba" stroke-width="0.6"/><text x="53" y="5.2" font-family="Liberation Sans" font-size="5" text-anchor="end" fill="#202030">Amount_Base</text><rect x="0.8" y="6.3999999999999995" width="6.025" height="2.55" fill="url(#gc)" stroke="#a8a6aa" stroke-width="0.6"/><rect x="0.8" y="9.55" width="6.025" height="2.55" fill="url(#gc)" stroke="#a8a6aa" stroke-width="0.6"/><rect x="7.425" y="6.3999999999999995" width="6.025" height="5.7" fill="url(#gc)" stroke="#a8a6aa" stroke-width="0.6"/><rect x="14.05" y="6.3999999999999995" width="6.025" height="5.7" fill="#10a818" stroke="#80b080" stroke-width="0.6"/><circle cx="17.0625" cy="9.25" r="1.5" fill="none" stroke="#002800" stroke-width="0.6"/><rect x="20.675" y="6.3999999999999995" width="6.025" height="5.7" fill="url(#gc)" stroke="#a8a6aa" stroke-width="0.6"/><rect x="27.3" y="6.3999999999999995" width="6.025" height="5.7" fill="url(#gc)" stroke="#a8a6aa" stroke-width="0.6"/><rect x="33.925" y="6.3999999999999995" width="6.025" height="5.7" fill="url(#gc)" stroke="#a8a6aa" stroke-width="0.6"/><rect x="40.55" y="6.3999999999999995" width="6.025" height="5.7" fill="url(#gc)" stroke="#a8a6aa" stroke-width="0.6"/><rect x="47.175" y="6.3999999999999995" width="6.025" height="5.7" fill="url(#gc)" stroke="#a8a6aa" stroke-width="0.6"/><rect x="0.6" y="12.6" width="33" height="6.4" fill="#fff"/><rect x="33.6" y="12.6" width="19.799999999999997" height="6.4" fill="url(#gc)"/><text x="32" y="18.3" font-family="Liberation Sans" font-weight="bold" font-size="7.2" text-anchor="end" fill="#000">0.00</text><text x="35.5" y="18" font-family="Liberation Sans" font-size="4.5" fill="#606060">ml</text></svg>
<svg style="position:absolute;left:126.7px;top:351px" width="54" height="19.5" viewBox="0 0 54 19.5"><rect x="0.3" y="0.3" width="53.4" height="18.9" fill="#c6c4c8" stroke="#b0aeb2" stroke-width="0.6"/><rect x="0.3" y="0.3" width="53.4" height="5.5" fill="url(#gt)" stroke="#b8b6ba" stroke-width="0.6"/><text x="53" y="5.2" font-family="Liberation Sans" font-size="5" text-anchor="end" fill="#202030">Reactor</text><rect x="0.8" y="6.3999999999999995" width="6.025" height="2.55" fill="url(#gc)" stroke="#a8a6aa" stroke-width="0.6"/><rect x="0.8" y="9.55" width="6.025" height="2.55" fill="url(#gc)" stroke="#a8a6aa" stroke-width="0.6"/><rect x="7.425" y="6.3999999999999995" width="6.025" height="5.7" fill="url(#gc)" stroke="#a8a6aa" stroke-width="0.6"/><rect x="14.05" y="6.3999999999999995" width="6.025" height="5.7" fill="#10a818" stroke="#80b080" stroke-width="0.6"/><circle cx="17.0625" cy="9.25" r="1.5" fill="none" stroke="#002800" stroke-width="0.6"/><rect x="20.675" y="6.3999999999999995" width="6.025" height="5.7" fill="url(#gc)" stroke="#a8a6aa" stroke-width="0.6"/><rect x="27.3" y="6.3999999999999995" width="6.025" height="5.7" fill="url(#gc)" stroke="#a8a6aa" stroke-width="0.6"/><rect x="33.925" y="6.3999999999999995" width="6.025" height="5.7" fill="url(#gc)" stroke="#a8a6aa" stroke-width="0.6"/><rect x="40.55" y="6.3999999999999995" width="6.025" height="5.7" fill="url(#gc)" stroke="#a8a6aa" stroke-width="0.6"/><rect x="47.175" y="6.3999999999999995" width="6.025" height="5.7" fill="url(#gc)" stroke="#a8a6aa" stroke-width="0.6"/><rect x="0.6" y="12.6" width="33" height="6.4" fill="#fff"/><rect x="33.6" y="12.6" width="19.799999999999997" height="6.4" fill="url(#gc)"/><text x="32" y="18.3" font-family="Liberation Sans" font-weight="bold" font-size="7.2" text-anchor="end" fill="#000">0.80</text></svg>
<svg style="position:absolute;left:271.8px;top:342px" width="54" height="19.5" viewBox="0 0 54 19.5"><rect x="0.3" y="0.3" width="53.4" height="18.9" fill="#c6c4c8" stroke="#b0aeb2" stroke-width="0.6"/><rect x="0.3" y="0.3" width="53.4" height="5.5" fill="url(#gt)" stroke="#b8b6ba" stroke-width="0.6"/><text x="53" y="5.2" font-family="Liberation Sans" font-size="5" text-anchor="end" fill="#202030">pH</text><rect x="0.8" y="6.3999999999999995" width="6.025" height="2.55" fill="url(#gc)" stroke="#a8a6aa" stroke-width="0.6"/><rect x="0.8" y="9.55" width="6.025" height="2.55" fill="url(#gc)" stroke="#a8a6aa" stroke-width="0.6"/><rect x="7.425" y="6.3999999999999995" width="6.025" height="5.7" fill="url(#gc)" stroke="#a8a6aa" stroke-width="0.6"/><rect x="14.05" y="6.3999999999999995" width="6.025" height="5.7" fill="#10a818" stroke="#80b080" stroke-width="0.6"/><circle cx="17.0625" cy="9.25" r="1.5" fill="none" stroke="#002800" stroke-width="0.6"/><rect x="20.675" y="6.3999999999999995" width="6.025" height="5.7" fill="url(#gc)" stroke="#a8a6aa" stroke-width="0.6"/><rect x="27.3" y="6.3999999999999995" width="6.025" height="5.7" fill="url(#gc)" stroke="#a8a6aa" stroke-width="0.6"/><rect x="33.925" y="6.3999999999999995" width="6.025" height="5.7" fill="url(#gc)" stroke="#a8a6aa" stroke-width="0.6"/><rect x="40.55" y="6.3999999999999995" width="6.025" height="5.7" fill="url(#gc)" stroke="#a8a6aa" stroke-width="0.6"/><rect x="47.175" y="6.3999999999999995" width="6.025" height="5.7" fill="url(#gc)" stroke="#a8a6aa" stroke-width="0.6"/><rect x="0.6" y="12.6" width="33" height="6.4" fill="#fff"/><rect x="33.6" y="12.6" width="19.799999999999997" height="6.4" fill="url(#gc)"/><text x="32" y="18.3" font-family="Liberation Sans" font-weight="bold" font-size="7.2" text-anchor="end" fill="#000">7.88</text></svg>
<svg style="position:absolute;left:271.8px;top:369.5px" width="54" height="19.5" viewBox="0 0 54 19.5"><rect x="0.3" y="0.3" width="53.4" height="18.9" fill="#c6c4c8" stroke="#b0aeb2" stroke-width="0.6"/><rect x="0.3" y="0.3" width="53.4" height="5.5" fill="url(#gt)" stroke="#b8b6ba" stroke-width="0.6"/><text x="53" y="5.2" font-family="Liberation Sans" font-size="5" text-anchor="end" fill="#202030">TI</text><rect x="0.8" y="6.3999999999999995" width="6.025" height="2.55" fill="url(#gc)" stroke="#a8a6aa" stroke-width="0.6"/><rect x="0.8" y="9.55" width="6.025" height="2.55" fill="url(#gc)" stroke="#a8a6aa" stroke-width="0.6"/><rect x="7.425" y="6.3999999999999995" width="6.025" height="5.7" fill="url(#gc)" stroke="#a8a6aa" stroke-width="0.6"/><rect x="14.05" y="6.3999999999999995" width="6.025" height="5.7" fill="#10a818" stroke="#80b080" stroke-width="0.6"/><circle cx="17.0625" cy="9.25" r="1.5" fill="none" stroke="#002800" stroke-width="0.6"/><rect x="20.675" y="6.3999999999999995" width="6.025" height="5.7" fill="url(#gc)" stroke="#a8a6aa" stroke-width="0.6"/><rect x="27.3" y="6.3999999999999995" width="6.025" height="5.7" fill="url(#gc)" stroke="#a8a6aa" stroke-width="0.6"/><rect x="33.925" y="6.3999999999999995" width="6.025" height="5.7" fill="url(#gc)" stroke="#a8a6aa" stroke-width="0.6"/><rect x="40.55" y="6.3999999999999995" width="6.025" height="5.7" fill="url(#gc)" stroke="#a8a6aa" stroke-width="0.6"/><rect x="47.175" y="6.3999999999999995" width="6.025" height="5.7" fill="url(#gc)" stroke="#a8a6aa" stroke-width="0.6"/><rect x="0.6" y="12.6" width="33" height="6.4" fill="#fff"/><rect x="33.6" y="12.6" width="19.799999999999997" height="6.4" fill="url(#gc)"/><text x="32" y="18.3" font-family="Liberation Sans" font-weight="bold" font-size="7.2" text-anchor="end" fill="#000">77.77</text><text x="35.5" y="18" font-family="Liberation Sans" font-size="4.5" fill="#606060">K</text></svg>
<svg style="position:absolute;left:56.2px;top:192px" width="50" height="12" viewBox="0 0 50 12"><rect x="0.3" y="0.3" width="49.4" height="11.4" fill="#c6c4c8" stroke="#b0aeb2" stroke-width="0.6"/><rect x="0.3" y="0.3" width="49.4" height="4.8" fill="url(#gt)" stroke="#b8b6ba" stroke-width="0.6"/><text x="49" y="4.5" font-family="Liberation Sans" font-size="5" text-anchor="end" fill="#202030">ILOCK</text><rect x="0.8" y="5.3999999999999995" width="6.0" height="6.0" fill="url(#gc)" stroke="#a8a6aa" stroke-width="0.6"/><rect x="7.3999999999999995" y="5.3999999999999995" width="6.0" height="6.0" fill="url(#gc)" stroke="#a8a6aa" stroke-width="0.6"/><rect x="13.9" y="5.4" width="35.6" height="6" fill="#00e400" stroke="#b8b0b8" stroke-width="0.5"/></svg>
<svg style="position:absolute;left:54.9px;top:208px" width="54" height="12.5" viewBox="0 0 54 12.5"><rect x="0.3" y="0.3" width="53.4" height="11.9" fill="#c6c4c8" stroke="#b0aeb2" stroke-width="0.6"/><rect x="0.3" y="0.3" width="53.4" height="5" fill="url(#gt)" stroke="#b8b6ba" stroke-width="0.6"/><text x="53" y="4.7" font-family="Liberation Sans" font-size="5" text-anchor="end" fill="#202030">VALVE1</text><rect x="0.8" y="5.8999999999999995" width="6.025" height="2.6999999999999997" fill="url(#gc)" stroke="#a8a6aa" stroke-width="0.6"/><rect x="0.8" y="9.2" width="6.025" height="2.6999999999999997" fill="url(#gc)" stroke="#a8a6aa" stroke-width="0.6"/><rect x="7.425" y="5.8999999999999995" width="6.025" height="6.0" fill="url(#gc)" stroke="#a8a6aa" stroke-width="0.6"/><rect x="14.05" y="5.8999999999999995" width="6.025" height="6.0" fill="#10b818" stroke="#90a890" stroke-width="0.6"/><text x="17.0625" y="10.8" font-family="Liberation Sans" font-weight="bold" font-size="5.5" text-anchor="middle" fill="#002000">A</text><rect x="20.675" y="5.8999999999999995" width="6.025" height="6.0" fill="url(#gc)" stroke="#a8a6aa" stroke-width="0.6"/><rect x="27.3" y="5.8999999999999995" width="6.025" height="6.0" fill="url(#gc)" stroke="#a8a6aa" stroke-width="0.6"/><path d="M28.8 7.1 Q31.0 6.3999999999999995 32.2 8.6 L33.0 11.1 L30.0 11.6 Z" fill="#f0e000" stroke="#606040" stroke-width="0.5"/><rect x="33.925" y="5.8999999999999995" width="6.025" height="6.0" fill="url(#gc)" stroke="#a8a6aa" stroke-width="0.6"/><rect x="40.55" y="5.8999999999999995" width="6.025" height="6.0" fill="url(#gc)" stroke="#a8a6aa" stroke-width="0.6"/><path d="M41.55 8.8h4v2.5h-4z M42.55 8.8v-1.2a1 1 0 0 1 2 0v1.2" fill="none" stroke="#303030" stroke-width="0.6"/><rect x="47.175" y="5.8999999999999995" width="6.025" height="6.0" fill="url(#gc)" stroke="#a8a6aa" stroke-width="0.6"/></svg>
<svg style="position:absolute;left:262.5px;top:192px" width="50" height="12" viewBox="0 0 50 12"><rect x="0.3" y="0.3" width="49.4" height="11.4" fill="#c6c4c8" stroke="#b0aeb2" stroke-width="0.6"/><rect x="0.3" y="0.3" width="49.4" height="4.8" fill="url(#gt)" stroke="#b8b6ba" stroke-width="0.6"/><text x="49" y="4.5" font-family="Liberation Sans" font-size="5" text-anchor="end" fill="#202030">ILOCK1</text><rect x="0.8" y="5.3999999999999995" width="6.0" height="6.0" fill="url(#gc)" stroke="#a8a6aa" stroke-width="0.6"/><rect x="7.3999999999999995" y="5.3999999999999995" width="6.0" height="6.0" fill="url(#gc)" stroke="#a8a6aa" stroke-width="0.6"/><rect x="13.9" y="5.4" width="35.6" height="6" fill="#00e400" stroke="#b8b0b8" stroke-width="0.5"/></svg>
<svg style="position:absolute;left:260.7px;top:209.3px" width="54" height="12.5" viewBox="0 0 54 12.5"><rect x="0.3" y="0.3" width="53.4" height="11.9" fill="#c6c4c8" stroke="#b0aeb2" stroke-width="0.6"/><rect x="0.3" y="0.3" width="53.4" height="5" fill="url(#gt)" stroke="#b8b6ba" stroke-width="0.6"/><text x="53" y="4.7" font-family="Liberation Sans" font-size="5" text-anchor="end" fill="#202030">VALVE2</text><rect x="0.8" y="5.8999999999999995" width="6.025" height="2.6999999999999997" fill="url(#gc)" stroke="#a8a6aa" stroke-width="0.6"/><rect x="0.8" y="9.2" width="6.025" height="2.6999999999999997" fill="url(#gc)" stroke="#a8a6aa" stroke-width="0.6"/><rect x="7.425" y="5.8999999999999995" width="6.025" height="6.0" fill="url(#gc)" stroke="#a8a6aa" stroke-width="0.6"/><rect x="14.05" y="5.8999999999999995" width="6.025" height="6.0" fill="#8c8c8c" stroke="#a0a0a0" stroke-width="0.6"/><text x="17.0625" y="10.8" font-family="Liberation Sans" font-weight="bold" font-size="5.5" text-anchor="middle" fill="#000">M</text><rect x="20.675" y="5.8999999999999995" width="6.025" height="6.0" fill="url(#gc)" stroke="#a8a6aa" stroke-width="0.6"/><rect x="27.3" y="5.8999999999999995" width="6.025" height="6.0" fill="url(#gc)" stroke="#a8a6aa" stroke-width="0.6"/><path d="M28.8 7.1 Q31.0 6.3999999999999995 32.2 8.6 L33.0 11.1 L30.0 11.6 Z" fill="#f0e000" stroke="#606040" stroke-width="0.5"/><rect x="33.925" y="5.8999999999999995" width="6.025" height="6.0" fill="url(#gc)" stroke="#a8a6aa" stroke-width="0.6"/><rect x="40.55" y="5.8999999999999995" width="6.025" height="6.0" fill="url(#gc)" stroke="#a8a6aa" stroke-width="0.6"/><path d="M41.55 8.8h4v2.5h-4z M42.55 8.8v-1.2a1 1 0 0 1 2 0v1.2" fill="none" stroke="#303030" stroke-width="0.6"/><rect x="47.175" y="5.8999999999999995" width="6.025" height="6.0" fill="url(#gc)" stroke="#a8a6aa" stroke-width="0.6"/></svg>
<svg style="position:absolute;left:57.5px;top:284.3px" width="50" height="12" viewBox="0 0 50 12"><rect x="0.3" y="0.3" width="49.4" height="11.4" fill="#c6c4c8" stroke="#b0aeb2" stroke-width="0.6"/><rect x="0.3" y="0.3" width="49.4" height="4.8" fill="url(#gt)" stroke="#b8b6ba" stroke-width="0.6"/><text x="49" y="4.5" font-family="Liberation Sans" font-size="5" text-anchor="end" fill="#202030">ILOCK1</text><rect x="0.8" y="5.3999999999999995" width="6.0" height="6.0" fill="url(#gc)" stroke="#a8a6aa" stroke-width="0.6"/><rect x="7.3999999999999995" y="5.3999999999999995" width="6.0" height="6.0" fill="url(#gc)" stroke="#a8a6aa" stroke-width="0.6"/><rect x="13.9" y="5.4" width="35.6" height="6" fill="#00e400" stroke="#b8b0b8" stroke-width="0.5"/></svg>
<svg style="position:absolute;left:54.5px;top:300.7px" width="54" height="12.5" viewBox="0 0 54 12.5"><rect x="0.3" y="0.3" width="53.4" height="11.9" fill="#c6c4c8" stroke="#b0aeb2" stroke-width="0.6"/><rect x="0.3" y="0.3" width="53.4" height="5" fill="url(#gt)" stroke="#b8b6ba" stroke-width="0.6"/><text x="53" y="4.7" font-family="Liberation Sans" font-size="5" text-anchor="end" fill="#202030">VALVE1</text><rect x="0.8" y="5.8999999999999995" width="6.025" height="2.6999999999999997" fill="url(#gc)" stroke="#a8a6aa" stroke-width="0.6"/><rect x="0.8" y="9.2" width="6.025" height="2.6999999999999997" fill="url(#gc)" stroke="#a8a6aa" stroke-width="0.6"/><rect x="7.425" y="5.8999999999999995" width="6.025" height="6.0" fill="url(#gc)" stroke="#a8a6aa" stroke-width="0.6"/><rect x="14.05" y="5.8999999999999995" width="6.025" height="6.0" fill="#8c8c8c" stroke="#a0a0a0" stroke-width="0.6"/><text x="17.0625" y="10.8" font-family="Liberation Sans" font-weight="bold" font-size="5.5" text-anchor="middle" fill="#000">M</text><rect x="20.675" y="5.8999999999999995" width="6.025" height="6.0" fill="url(#gc)" stroke="#a8a6aa" stroke-width="0.6"/><rect x="27.3" y="5.8999999999999995" width="6.025" height="6.0" fill="url(#gc)" stroke="#a8a6aa" stroke-width="0.6"/><path d="M28.8 7.1 Q31.0 6.3999999999999995 32.2 8.6 L33.0 11.1 L30.0 11.6 Z" fill="#f0e000" stroke="#606040" stroke-width="0.5"/><rect x="33.925" y="5.8999999999999995" width="6.025" height="6.0" fill="url(#gc)" stroke="#a8a6aa" stroke-width="0.6"/><rect x="40.55" y="5.8999999999999995" width="6.025" height="6.0" fill="url(#gc)" stroke="#a8a6aa" stroke-width="0.6"/><path d="M41.55 8.8h4v2.5h-4z M42.55 8.8v-1.2a1 1 0 0 1 2 0v1.2" fill="none" stroke="#303030" stroke-width="0.6"/><rect x="47.175" y="5.8999999999999995" width="6.025" height="6.0" fill="url(#gc)" stroke="#a8a6aa" stroke-width="0.6"/></svg>
<svg style="position:absolute;left:262.5px;top:285.5px" width="50" height="12" viewBox="0 0 50 12"><rect x="0.3" y="0.3" width="49.4" height="11.4" fill="#c6c4c8" stroke="#b0aeb2" stroke-width="0.6"/><rect x="0.3" y="0.3" width="49.4" height="4.8" fill="url(#gt)" stroke="#b8b6ba" stroke-width="0.6"/><text x="49" y="4.5" font-family="Liberation Sans" font-size="5" text-anchor="end" fill="#202030">ILOCK</text><rect x="0.8" y="5.3999999999999995" width="6.0" height="6.0" fill="url(#gc)" stroke="#a8a6aa" stroke-width="0.6"/><rect x="7.3999999999999995" y="5.3999999999999995" width="6.0" height="6.0" fill="url(#gc)" stroke="#a8a6aa" stroke-width="0.6"/><rect x="13.9" y="5.4" width="35.6" height="6" fill="#00e400" stroke="#b8b0b8" stroke-width="0.5"/></svg>
<svg style="position:absolute;left:260px;top:303px" width="54" height="12.5" viewBox="0 0 54 12.5"><rect x="0.3" y="0.3" width="53.4" height="11.9" fill="#c6c4c8" stroke="#b0aeb2" stroke-width="0.6"/><rect x="0.3" y="0.3" width="53.4" height="5" fill="url(#gt)" stroke="#b8b6ba" stroke-width="0.6"/><text x="53" y="4.7" font-family="Liberation Sans" font-size="5" text-anchor="end" fill="#202030">VALVE1</text><rect x="0.8" y="5.8999999999999995" width="6.025" height="2.6999999999999997" fill="url(#gc)" stroke="#a8a6aa" stroke-width="0.6"/><rect x="0.8" y="9.2" width="6.025" height="2.6999999999999997" fill="url(#gc)" stroke="#a8a6aa" stroke-width="0.6"/><rect x="7.425" y="5.8999999999999995" width="6.025" height="6.0" fill="url(#gc)" stroke="#a8a6aa" stroke-width="0.6"/><rect x="14.05" y="5.8999999999999995" width="6.025" height="6.0" fill="#8c8c8c" stroke="#a0a0a0" stroke-width="0.6"/><text x="17.0625" y="10.8" font-family="Liberation Sans" font-weight="bold" font-size="5.5" text-anchor="middle" fill="#000">M</text><rect x="20.675" y="5.8999999999999995" width="6.025" height="6.0" fill="url(#gc)" stroke="#a8a6aa" stroke-width="0.6"/><rect x="27.3" y="5.8999999999999995" width="6.025" height="6.0" fill="url(#gc)" stroke="#a8a6aa" stroke-width="0.6"/><path d="M28.8 7.1 Q31.0 6.3999999999999995 32.2 8.6 L33.0 11.1 L30.0 11.6 Z" fill="#f0e000" stroke="#606040" stroke-width="0.5"/><rect x="33.925" y="5.8999999999999995" width="6.025" height="6.0" fill="url(#gc)" stroke="#a8a6aa" stroke-width="0.6"/><rect x="40.55" y="5.8999999999999995" width="6.025" height="6.0" fill="url(#gc)" stroke="#a8a6aa" stroke-width="0.6"/><path d="M41.55 8.8h4v2.5h-4z M42.55 8.8v-1.2a1 1 0 0 1 2 0v1.2" fill="none" stroke="#303030" stroke-width="0.6"/><rect x="47.175" y="5.8999999999999995" width="6.025" height="6.0" fill="url(#gc)" stroke="#a8a6aa" stroke-width="0.6"/></svg>
<svg style="position:absolute;left:198px;top:272.5px" width="53.5" height="12.5" viewBox="0 0 53.5 12.5"><rect x="0.3" y="0.3" width="52.9" height="11.9" fill="#c6c4c8" stroke="#b0aeb2" stroke-width="0.6"/><rect x="0.3" y="0.3" width="52.9" height="5" fill="url(#gt)" stroke="#b8b6ba" stroke-width="0.6"/><text x="52.5" y="4.7" font-family="Liberation Sans" font-size="5" text-anchor="end" fill="#202030">MOTOR1</text><rect x="0.8" y="5.8999999999999995" width="5.9625" height="2.6999999999999997" fill="url(#gc)" stroke="#a8a6aa" stroke-width="0.6"/><rect x="0.8" y="9.2" width="5.9625" height="2.6999999999999997" fill="url(#gc)" stroke="#a8a6aa" stroke-width="0.6"/><rect x="7.3625" y="5.8999999999999995" width="5.9625" height="6.0" fill="url(#gc)" stroke="#a8a6aa" stroke-width="0.6"/><rect x="13.925" y="5.8999999999999995" width="5.9625" height="6.0" fill="#10b818" stroke="#90a890" stroke-width="0.6"/><text x="16.90625" y="10.8" font-family="Liberation Sans" font-weight="bold" font-size="5.5" text-anchor="middle" fill="#002000">A</text><rect x="20.4875" y="5.8999999999999995" width="5.9625" height="6.0" fill="url(#gc)" stroke="#a8a6aa" stroke-width="0.6"/><rect x="27.05" y="5.8999999999999995" width="5.9625" height="6.0" fill="url(#gc)" stroke="#a8a6aa" stroke-width="0.6"/><path d="M28.55 7.1 Q30.75 6.3999999999999995 31.95 8.6 L32.75 11.1 L29.75 11.6 Z" fill="#f0e000" stroke="#606040" stroke-width="0.5"/><rect x="33.6125" y="5.8999999999999995" width="5.9625" height="6.0" fill="url(#gc)" stroke="#a8a6aa" stroke-width="0.6"/><rect x="40.175" y="5.8999999999999995" width="5.9625" height="6.0" fill="url(#gc)" stroke="#a8a6aa" stroke-width="0.6"/><path d="M41.175 8.8h4v2.5h-4z M42.175 8.8v-1.2a1 1 0 0 1 2 0v1.2" fill="none" stroke="#303030" stroke-width="0.6"/><rect x="46.7375" y="5.8999999999999995" width="5.9625" height="6.0" fill="url(#gc)" stroke="#a8a6aa" stroke-width="0.6"/></svg>
<svg style="position:absolute;left:299.2px;top:391.2px" width="54" height="12.5" viewBox="0 0 54 12.5"><rect x="0.3" y="0.3" width="53.4" height="11.9" fill="#c6c4c8" stroke="#b0aeb2" stroke-width="0.6"/><rect x="0.3" y="0.3" width="53.4" height="5" fill="url(#gt)" stroke="#b8b6ba" stroke-width="0.6"/><text x="53" y="4.7" font-family="Liberation Sans" font-size="5" text-anchor="end" fill="#202030">VALVE1</text><rect x="0.8" y="5.8999999999999995" width="6.025" height="2.6999999999999997" fill="url(#gc)" stroke="#a8a6aa" stroke-width="0.6"/><rect x="0.8" y="9.2" width="6.025" height="2.6999999999999997" fill="url(#gc)" stroke="#a8a6aa" stroke-width="0.6"/><rect x="7.425" y="5.8999999999999995" width="6.025" height="6.0" fill="url(#gc)" stroke="#a8a6aa" stroke-width="0.6"/><rect x="14.05" y="5.8999999999999995" width="6.025" height="6.0" fill="#8c8c8c" stroke="#a0a0a0" stroke-width="0.6"/><text x="17.0625" y="10.8" font-family="Liberation Sans" font-weight="bold" font-size="5.5" text-anchor="middle" fill="#000">M</text><rect x="20.675" y="5.8999999999999995" width="6.025" height="6.0" fill="url(#gc)" stroke="#a8a6aa" stroke-width="0.6"/><rect x="27.3" y="5.8999999999999995" width="6.025" height="6.0" fill="url(#gc)" stroke="#a8a6aa" stroke-width="0.6"/><path d="M28.8 7.1 Q31.0 6.3999999999999995 32.2 8.6 L33.0 11.1 L30.0 11.6 Z" fill="#f0e000" stroke="#606040" stroke-width="0.5"/><rect x="33.925" y="5.8999999999999995" width="6.025" height="6.0" fill="url(#gc)" stroke="#a8a6aa" stroke-width="0.6"/><rect x="40.55" y="5.8999999999999995" width="6.025" height="6.0" fill="url(#gc)" stroke="#a8a6aa" stroke-width="0.6"/><path d="M41.55 8.8h4v2.5h-4z M42.55 8.8v-1.2a1 1 0 0 1 2 0v1.2" fill="none" stroke="#303030" stroke-width="0.6"/><rect x="47.175" y="5.8999999999999995" width="6.025" height="6.0" fill="url(#gc)" stroke="#a8a6aa" stroke-width="0.6"/></svg>
<svg style="position:absolute;left:304px;top:425.2px" width="50" height="12" viewBox="0 0 50 12"><rect x="0.3" y="0.3" width="49.4" height="11.4" fill="#c6c4c8" stroke="#b0aeb2" stroke-width="0.6"/><rect x="0.3" y="0.3" width="49.4" height="4.8" fill="url(#gt)" stroke="#b8b6ba" stroke-width="0.6"/><text x="49" y="4.5" font-family="Liberation Sans" font-size="5" text-anchor="end" fill="#202030">ILOCK</text><rect x="0.8" y="5.3999999999999995" width="6.0" height="6.0" fill="url(#gc)" stroke="#a8a6aa" stroke-width="0.6"/><rect x="7.3999999999999995" y="5.3999999999999995" width="6.0" height="6.0" fill="url(#gc)" stroke="#a8a6aa" stroke-width="0.6"/><rect x="13.9" y="5.4" width="35.6" height="6" fill="#00e400" stroke="#b8b0b8" stroke-width="0.5"/></svg>
<div style="left:201.1px;top:233.1px;width:52.2px;height:24px;background:repeating-conic-gradient(#f07818 0 25%,#d4c4c4 0 50%);background-size:2px 2px;border:1px solid #f08020"></div>
<div style="left:206px;top:238px;width:42.5px;height:14.5px;background:#c8c8c8;border:1px solid #505050"></div>
<div style="left:206.5px;top:238.5px;width:41.5px;height:6.5px;background:linear-gradient(#8e8c90,#848286)"></div>
<div class="t" style="left:206px;top:238.3px;width:41.0px;height:7px;font-size:6.5px;line-height:7px;color:#bebcc2;text-align:right;overflow:hidden">ExecuteAll</div>
<div style="left:206.5px;top:245px;width:12px;height:7px;background:#ececec;border:1px solid #b4b4b4"></div>
<div style="left:218.5px;top:245px;width:7.375px;height:7px;background:#d6d6d6;border:1px solid #b4b4b4"></div>
<div style="left:225.875px;top:245px;width:7.375px;height:7px;background:#d6d6d6;border:1px solid #b4b4b4"></div>
<div style="left:233.25px;top:245px;width:7.375px;height:7px;background:#d6d6d6;border:1px solid #b4b4b4"></div>
<div style="left:240.625px;top:245px;width:7.375px;height:7px;background:#d6d6d6;border:1px solid #b4b4b4"></div>
<div style="left:478px;top:88px;width:42.5px;height:14.7px;background:#c8c8c8;border:1px solid #8c8a8e"></div>
<div style="left:478.5px;top:88.5px;width:41.5px;height:6.5px;background:linear-gradient(#8e8c90,#848286)"></div>
<div class="t" style="left:478px;top:88.3px;width:41.0px;height:7px;font-size:6.5px;line-height:7px;color:#bebcc2;text-align:right;overflow:hidden">ecuteAlternati</div>
<div style="left:478.5px;top:95px;width:12px;height:7px;background:#ececec;border:1px solid #b4b4b4"></div>
<div style="left:490.5px;top:95px;width:7.375px;height:7px;background:#d6d6d6;border:1px solid #b4b4b4"></div>
<div style="left:497.875px;top:95px;width:7.375px;height:7px;background:#d6d6d6;border:1px solid #b4b4b4"></div>
<div style="left:505.25px;top:95px;width:7.375px;height:7px;background:#d6d6d6;border:1px solid #b4b4b4"></div>
<div style="left:512.625px;top:95px;width:7.375px;height:7px;background:#d6d6d6;border:1px solid #b4b4b4"></div>
<svg style="position:absolute;left:217.3px;top:284.5px" width="16" height="16" viewBox="0 0 16 16"><defs><radialGradient id="mgr" cx="0.45" cy="0.4" r="0.65"><stop offset="0" stop-color="#50f070"/><stop offset="0.8" stop-color="#18d040"/><stop offset="1" stop-color="#10a030"/></radialGradient></defs><circle cx="8" cy="8" r="7.3" fill="url(#mgr)" stroke="#20a040" stroke-width="0.5"/><path d="M4.5 7 H8 V5 L11.5 8 L8 11 V9 H4.5 Z" fill="#d8e8d8" stroke="#206020" stroke-width="0.6"/></svg>
<svg style="position:absolute;left:186px;top:296px" width="78" height="118" viewBox="0 0 78 118"><defs><linearGradient id="rg" x1="0" x2="1"><stop offset="0" stop-color="#6e6e6e"/><stop offset="0.2" stop-color="#a8a8a8"/><stop offset="0.5" stop-color="#e4e4e4"/><stop offset="0.8" stop-color="#a8a8a8"/><stop offset="1" stop-color="#6a6a6a"/></linearGradient>
<linearGradient id="mg" x1="0" x2="1"><stop offset="0" stop-color="#b8b8b8"/><stop offset="0.45" stop-color="#f8f8f8"/><stop offset="1" stop-color="#a0a0a0"/></linearGradient>
<linearGradient id="bl" x1="0" x2="1"><stop offset="0" stop-color="#c0c0c0"/><stop offset="0.5" stop-color="#ffffff"/><stop offset="1" stop-color="#909090"/></linearGradient></defs>
<rect x="34" y="3.5" width="10.2" height="26.5" fill="url(#mg)" stroke="#606060" stroke-width="0.6"/>
<rect x="34.3" y="3.5" width="9.6" height="6" fill="#8a8a8a"/>
<path d="M36 3.5 V9.5 M38 3.5 V9.5 M40 3.5 V9.5 M42 3.5 V9.5" stroke="#5a5a5a" stroke-width="0.6"/>
<rect x="34.5" y="13.5" width="9.3" height="7.5" fill="#404040"/>
<rect x="35" y="17" width="3.2" height="4" fill="#fff"/><rect x="40.2" y="19" width="3.3" height="2" fill="#fff"/><rect x="38.5" y="14.5" width="1.2" height="6" fill="#000"/>
<path d="M4.4 41 C4.4 33.5 20 30.3 38.85 30.3 C57.7 30.3 73.6 33.5 73.6 41 V104 C73.6 111.5 58 114 38.85 114 C20 114 4.4 111.5 4.4 104 Z" fill="url(#rg)" stroke="#404040" stroke-width="0.9"/>
<rect x="7" y="40.5" width="63" height="63.5" fill="#7a7a7a" stroke="#3a3a3a" stroke-width="0.6"/>
<path d="M69.5 40.5 V104 H7.5 L12.5 100 H65 V44 Z" fill="#f0f0f0"/>
<rect x="12.5" y="43.5" width="53" height="57" fill="#000"/>
<rect x="36" y="30" width="6" height="14" fill="url(#mg)" stroke="#505050" stroke-width="0.5"/>
<rect x="33.5" y="42.5" width="11" height="2" fill="#707070"/>
<rect x="38" y="44" width="2" height="38.5" fill="#a8a8a8"/>
<rect x="37" y="82.5" width="4" height="5" fill="#c0c0c0"/>
<path d="M30 90.5 L36 86.5 L39 88 L42 86.5 L48 90.5 L46 95 L42 92 L40 98 L38 92 L34 98 L32 94 Z" fill="#e8e8e8" stroke="#909090" stroke-width="0.4"/>
<text x="38.5" y="111" font-family="Liberation Sans" font-weight="bold" font-size="7" text-anchor="middle" fill="#101010">Reactor</text></svg>
<svg style="position:absolute;left:0px;top:0px" width="600" height="480" viewBox="0 0 600 480"><line x1="193" y1="407.5" x2="167" y2="424.5" stroke="#000" stroke-width="1.4" stroke-dasharray="2.6,1.8"/></svg>
<div style="left:120.3px;top:412.2px;width:42.3px;height:14.5px;background:#c8c8c8;border:1px solid #8c8a8e"></div>
<div style="left:120.8px;top:412.7px;width:41.3px;height:6.5px;background:linear-gradient(#8e8c90,#848286)"></div>
<div class="t" style="left:120.3px;top:412.5px;width:40.8px;height:7px;font-size:6.5px;line-height:7px;color:#bebcc2;text-align:right;overflow:hidden">Drain$Reactor</div>
<div style="left:120.8px;top:419.2px;width:12px;height:7px;background:#ececec;border:1px solid #b4b4b4"></div>
<div style="left:132.8px;top:419.2px;width:7.324999999999999px;height:7px;background:#d6d6d6;border:1px solid #b4b4b4"></div>
<div style="left:140.125px;top:419.2px;width:7.324999999999999px;height:7px;background:#d6d6d6;border:1px solid #b4b4b4"></div>
<div style="left:147.45000000000002px;top:419.2px;width:7.324999999999999px;height:7px;background:#d6d6d6;border:1px solid #b4b4b4"></div>
<div style="left:154.775px;top:419.2px;width:7.324999999999999px;height:7px;background:#d6d6d6;border:1px solid #b4b4b4"></div>
<div style="left:332.3px;top:346.3px;width:15.5px;height:15.5px;background:linear-gradient(#e8e8e8,#c6c6c6);border:1px solid #808080;border-top-color:#f0f0f0;border-left-color:#f0f0f0"></div>
<svg style="position:absolute;left:332.3px;top:346.3px" width="16" height="16" viewBox="0 0 16 16"><rect x="3" y="4" width="9.5" height="8" fill="#fff" stroke="#404040" stroke-width="0.6"/><path d="M3.5 9.5 L6 6.5 L8 8 L12 5.5" stroke="#d02020" stroke-width="0.9" fill="none"/><path d="M3.5 10.5 H12" stroke="#303030" stroke-width="0.6"/></svg>
<div style="left:332.3px;top:370.3px;width:15.5px;height:15.5px;background:linear-gradient(#e8e8e8,#c6c6c6);border:1px solid #808080;border-top-color:#f0f0f0;border-left-color:#f0f0f0"></div>
<svg style="position:absolute;left:332.3px;top:370.3px" width="16" height="16" viewBox="0 0 16 16"><rect x="3" y="4" width="9.5" height="8" fill="#fff" stroke="#404040" stroke-width="0.6"/><path d="M3.5 9.5 L6 6.5 L8 8 L12 5.5" stroke="#d02020" stroke-width="0.9" fill="none"/><path d="M3.5 10.5 H12" stroke="#303030" stroke-width="0.6"/></svg>
<svg style="position:absolute;left:360.0px;top:412px" width="58" height="42" viewBox="0 0 58 42"><defs><clipPath id="bt360"><path d="M0.8 14 L2.3 12 H55.3 L56.8 14 V39.6 Q56.8 41 55.4 41 H2.2 Q0.8 41 0.8 39.6 Z"/></clipPath><linearGradient id="nbt360" x1="0" x2="1"><stop offset="0" stop-color="#808080"/><stop offset="0.45" stop-color="#f4f4f4"/><stop offset="1" stop-color="#707070"/></linearGradient></defs><g clip-path="url(#bt360)"><rect x="0.8" y="11" width="6.3" height="31" fill="#00009a"/><rect x="6.5" y="11" width="9.4" height="31" fill="#0000b4"/><rect x="15.3" y="11" width="10.1" height="31" fill="#1010c8"/><rect x="24.8" y="11" width="9.399999999999997" height="31" fill="#6a6aec"/><rect x="33.599999999999994" y="11" width="10.300000000000002" height="31" fill="#1414cc"/><rect x="43.3" y="11" width="9.1" height="31" fill="#0000b8"/><rect x="51.8" y="11" width="7.6" height="31" fill="#00009c"/><rect x="24.8" y="12" width="8.8" height="5" fill="#8080f4" opacity="0.6"/></g><path d="M3.2 9.2 H54.4 L57 12.6 H0.5 Z" fill="#505050" stroke="#383838" stroke-width="0.4"/><rect x="3.5" y="9.6" width="50.5" height="1.2" fill="#8a8a8a"/><path d="M25 9.5 V6.5 Q25 2.6 28.85 2.4 Q32.7 2.6 32.7 6.5 V9.5 Z" fill="url(#nbt360)" stroke="#606060" stroke-width="0.4"/><rect x="24.5" y="7.2" width="8.7" height="2" fill="#505050"/></svg>
<svg style="position:absolute;left:427.4px;top:412px" width="58" height="42" viewBox="0 0 58 42"><defs><clipPath id="bt428"><path d="M0.8 14 L2.3 12 H55.3 L56.8 14 V39.6 Q56.8 41 55.4 41 H2.2 Q0.8 41 0.8 39.6 Z"/></clipPath><linearGradient id="nbt428" x1="0" x2="1"><stop offset="0" stop-color="#808080"/><stop offset="0.45" stop-color="#f4f4f4"/><stop offset="1" stop-color="#707070"/></linearGradient></defs><g clip-path="url(#bt428)"><rect x="0.8" y="11" width="6.3" height="31" fill="#00009a"/><rect x="6.5" y="11" width="9.4" height="31" fill="#0000b4"/><rect x="15.3" y="11" width="10.1" height="31" fill="#1010c8"/><rect x="24.8" y="11" width="9.399999999999997" height="31" fill="#6a6aec"/><rect x="33.599999999999994" y="11" width="10.300000000000002" height="31" fill="#1414cc"/><rect x="43.3" y="11" width="9.1" height="31" fill="#0000b8"/><rect x="51.8" y="11" width="7.6" height="31" fill="#00009c"/><rect x="24.8" y="12" width="8.8" height="5" fill="#8080f4" opacity="0.6"/></g><path d="M3.2 9.2 H54.4 L57 12.6 H0.5 Z" fill="#505050" stroke="#383838" stroke-width="0.4"/><rect x="3.5" y="9.6" width="50.5" height="1.2" fill="#8a8a8a"/><path d="M25 9.5 V6.5 Q25 2.6 28.85 2.4 Q32.7 2.6 32.7 6.5 V9.5 Z" fill="url(#nbt428)" stroke="#606060" stroke-width="0.4"/><rect x="24.5" y="7.2" width="8.7" height="2" fill="#505050"/></svg>
<div style="left:454px;top:110px;width:113.5px;height:184px;background:#9c9c9e;border:1.5px solid #141414;border-right-width:2px;border-bottom-width:2px"></div>
<div style="left:455.5px;top:111.5px;width:110.5px;height:4.5px;background:#fafafa"></div>
<div style="left:455.5px;top:111.5px;width:2.5px;height:181px;background:#ececec"></div>
<div style="left:458px;top:116px;width:107.5px;height:12.5px;background:#9e9ea0"></div>
<div class="t" style="left:454px;top:118px;width:113.5px;text-align:center;font-size:8.5px;line-height:10px;font-weight:bold;color:#000;-webkit-text-stroke:0.2px #000">Controlboard</div>
<div style="left:460.2px;top:128.5px;width:102.8px;height:151.5px;background:#8e8e90;border:1.2px solid #3a3a3a;border-right-color:#f4f4f4;border-bottom-color:#f4f4f4"></div>
<div style="left:466.7px;top:138.5px;width:42.3px;height:14.6px;background:#fff;font-size:6px;font-weight:bold;color:#000;text-align:center;line-height:6.6px;padding-top:1.5px">Reset Volume<br>Acid</div>
<div style="left:515px;top:138.5px;width:42.3px;height:14.6px;background:#fff;font-size:6px;font-weight:bold;color:#000;text-align:center;line-height:6.6px;padding-top:1.5px">Reset Volume<br>Base</div>
<svg style="position:absolute;left:480.5px;top:158px" width="16" height="20" viewBox="0 0 16 20"><rect x="0.4" y="0.4" width="15.2" height="19.2" fill="#c8c8c8" stroke="#505050" stroke-width="0.8"/><path d="M1 1 H15 L14 2 H2 V18 L1 19 Z" fill="#f0f0f0"/><path d="M4.5 2.5 H11.5 L13.5 9.3 H2.5 Z" fill="#50e050"/><rect x="2.5" y="9.3" width="11" height="8.2" fill="#8c0000"/><rect x="7.6" y="4" width="0.8" height="4" fill="#000"/><circle cx="8" cy="13.5" r="1.4" fill="none" stroke="#300000" stroke-width="0.6"/></svg>
<svg style="position:absolute;left:528.5px;top:158px" width="16" height="20" viewBox="0 0 16 20"><rect x="0.4" y="0.4" width="15.2" height="19.2" fill="#c8c8c8" stroke="#505050" stroke-width="0.8"/><path d="M1 1 H15 L14 2 H2 V18 L1 19 Z" fill="#f0f0f0"/><path d="M4.5 2.5 H11.5 L13.5 9.3 H2.5 Z" fill="#50e050"/><rect x="2.5" y="9.3" width="11" height="8.2" fill="#8c0000"/><rect x="7.6" y="4" width="0.8" height="4" fill="#000"/><circle cx="8" cy="13.5" r="1.4" fill="none" stroke="#300000" stroke-width="0.6"/></svg>
<div style="left:466.7px;top:190px;width:42px;height:11.3px;background:#fff;font-size:6px;font-weight:bold;color:#000;text-align:center;line-height:11.3px">Reset Temp</div>
<div style="left:515px;top:190px;width:41.8px;height:11.3px;background:#fff;font-size:6px;font-weight:bold;color:#000;text-align:center;line-height:11.3px">Reset Valves</div>
<svg style="position:absolute;left:480.5px;top:206px" width="16" height="20" viewBox="0 0 16 20"><rect x="0.4" y="0.4" width="15.2" height="19.2" fill="#c8c8c8" stroke="#505050" stroke-width="0.8"/><path d="M1 1 H15 L14 2 H2 V18 L1 19 Z" fill="#f0f0f0"/><path d="M4.5 2.5 H11.5 L13.5 9.3 H2.5 Z" fill="#50e050"/><rect x="2.5" y="9.3" width="11" height="8.2" fill="#8c0000"/><rect x="7.6" y="4" width="0.8" height="4" fill="#000"/><circle cx="8" cy="13.5" r="1.4" fill="none" stroke="#300000" stroke-width="0.6"/></svg>
<svg style="position:absolute;left:528.5px;top:206px" width="16" height="20" viewBox="0 0 16 20"><rect x="0.4" y="0.4" width="15.2" height="19.2" fill="#c8c8c8" stroke="#505050" stroke-width="0.8"/><path d="M1 1 H15 L14 2 H2 V18 L1 19 Z" fill="#f0f0f0"/><path d="M4.5 2.5 H11.5 L13.5 9.3 H2.5 Z" fill="#50e050"/><rect x="2.5" y="9.3" width="11" height="8.2" fill="#8c0000"/><rect x="7.6" y="4" width="0.8" height="4" fill="#000"/><circle cx="8" cy="13.5" r="1.4" fill="none" stroke="#300000" stroke-width="0.6"/></svg>
<div style="left:466.7px;top:233.8px;width:42px;height:11.7px;background:#fff;font-size:6px;font-weight:bold;color:#000;text-align:center;line-height:11.7px">View Tag</div>
<svg style="position:absolute;left:480.5px;top:251px" width="16" height="20" viewBox="0 0 16 20"><rect x="0.4" y="0.4" width="15.2" height="19.2" fill="#c8c8c8" stroke="#505050" stroke-width="0.8"/><path d="M1 1 H15 L14 2 H2 V18 L1 19 Z" fill="#f0f0f0"/><path d="M4.5 2.5 H11.5 L13.5 9.3 H2.5 Z" fill="#50e050"/><rect x="2.5" y="9.3" width="11" height="8.2" fill="#8c0000"/><rect x="7.6" y="4" width="0.8" height="4" fill="#000"/><circle cx="8" cy="13.5" r="1.4" fill="none" stroke="#300000" stroke-width="0.6"/></svg>
<div style="left:0px;top:455.5px;width:600px;height:1px;background:#a6a4a8"></div>
<div style="left:0px;top:456.5px;width:600px;height:1px;background:#d8d6da"></div>
<div class="tb" style="left:23px;top:458.5px;width:19.5px;height:22px;"></div>
<div class="tb" style="left:53px;top:458.5px;width:19.5px;height:22px;"></div>
<div class="tb" style="left:78px;top:458.5px;width:19.5px;height:22px;"></div>
<div class="tb" style="left:103px;top:458.5px;width:19.5px;height:22px;"></div>
<div class="tb" style="left:128px;top:458.5px;width:19.5px;height:22px;"></div>
<div class="tb" style="left:158.5px;top:458.5px;width:19.0px;height:22px;"></div>
<div class="tb" style="left:183.5px;top:458.5px;width:19.0px;height:22px;"></div>
<div class="tb" style="left:208.5px;top:458.5px;width:19.0px;height:22px;"></div>
<div class="tb" style="left:233px;top:458.5px;width:19.5px;height:22px;"></div>
<div class="tb" style="left:257.5px;top:458.5px;width:19.0px;height:22px;"></div>
<div class="tb" style="left:282.5px;top:458.5px;width:19.0px;height:22px;"></div>
<div class="tb" style="left:307.5px;top:458.5px;width:19.0px;height:22px;"></div>
<div class="tb" style="left:328px;top:458.5px;width:19px;height:22px;"></div>
<div class="tb" style="left:353.5px;top:458.5px;width:19.0px;height:22px;"></div>
<div class="tb" style="left:375px;top:458.5px;width:19px;height:22px;"></div>
<div class="tb" style="left:401px;top:458.5px;width:19px;height:22px;"></div>
<div class="tb" style="left:422.5px;top:458.5px;width:19.0px;height:22px;"></div>
<div class="tb" style="left:444px;top:458.5px;width:19px;height:22px;"></div>
<div class="tb" style="left:470px;top:458.5px;width:19px;height:22px;"></div>
<div class="tb" style="left:497.5px;top:458.5px;width:19.0px;height:22px;"></div>
<div class="tb" style="left:525px;top:458.5px;width:34px;height:22px;"></div>
<div class="tb" style="left:562.5px;top:458.5px;width:34.0px;height:22px;"></div>
<svg style="position:absolute;left:23px;top:458.5px" width="19.5" height="21" viewBox="0 0 19.5 21"><path d="M3 2 L17 10 L3 18 Z" fill="#18c018" stroke="#0a700a" stroke-width="0.8"/><path d="M5 5.5 L13.5 10 L5 14.5 Z" fill="#10a010"/></svg>
<svg style="position:absolute;left:53px;top:458.5px" width="19.5" height="21" viewBox="0 0 19.5 21"><circle cx="6" cy="6" r="2.6" fill="none" stroke="#909090" stroke-width="1.2"/><path d="M6 8.5 V16 M6 12h1.5 M6 14.5h1.5" stroke="#808080" stroke-width="1.3"/><circle cx="8" cy="8" r="2.8" fill="#f0c030" stroke="#b08010" stroke-width="0.5"/><path d="M10 7 H17 V9 H15.5 V10.5 H14 V9 H10 Z" fill="#f0c030" stroke="#b08010" stroke-width="0.4"/></svg>
<svg style="position:absolute;left:78px;top:458.5px" width="19.5" height="21" viewBox="0 0 19.5 21"><defs><linearGradient id="rb" x1="0" x2="1"><stop offset="0" stop-color="#f8c070"/><stop offset="0.5" stop-color="#e0f0a0"/><stop offset="1" stop-color="#f0a0a0"/></linearGradient></defs><rect x="4" y="4" width="12" height="13" fill="url(#rb)" stroke="#70a0d0" stroke-width="1"/><circle cx="5" cy="5" r="2.8" fill="#ffd020"/><circle cx="5" cy="5" r="1.2" fill="#fff080"/></svg>
<svg style="position:absolute;left:103px;top:458.5px" width="19.5" height="21" viewBox="0 0 19.5 21"><rect x="3" y="3" width="5" height="14" fill="#e0e080" stroke="#909040" stroke-width="0.6"/><rect x="4" y="5" width="3" height="2" fill="#40a040"/><rect x="4" y="9" width="3" height="2" fill="#40a040"/><rect x="4" y="13" width="3" height="2" fill="#40a040"/><rect x="9" y="4" width="6" height="6" fill="#d0e0f0"/><rect x="8" y="10" width="9" height="6" fill="#e8e8e8" stroke="#808080" stroke-width="0.6"/><rect x="14" y="12" width="2" height="1" fill="#e04040"/></svg>
<svg style="position:absolute;left:128px;top:458.5px" width="19.5" height="21" viewBox="0 0 19.5 21"><rect x="2" y="3" width="15" height="14" fill="#e4e4e4"/><path d="M3 5 L9 12 L16 15" stroke="#4060e0" stroke-width="1" fill="none"/><path d="M3 16 L9 9 L12 11 L16 6" stroke="#b02060" stroke-width="1" fill="none"/></svg>
<svg style="position:absolute;left:158.5px;top:458.5px" width="19.0" height="21" viewBox="0 0 19.0 21"><defs><linearGradient id="rb2" x1="0" x2="1"><stop offset="0" stop-color="#f0a070"/><stop offset="1" stop-color="#f0f0a0"/></linearGradient></defs><rect x="3" y="4" width="12" height="13" fill="url(#rb2)" stroke="#a0a0c0" stroke-width="0.6"/><rect x="12" y="3" width="3" height="12" rx="1.5" fill="#fff" stroke="#30a0e0" stroke-width="1"/><circle cx="13.5" cy="16" r="2.2" fill="#e00000" stroke="#30a0e0" stroke-width="0.8"/></svg>
<svg style="position:absolute;left:183.5px;top:458.5px" width="19.0" height="21" viewBox="0 0 19.0 21"><rect x="3" y="3" width="9" height="9" fill="#f0e0b0" stroke="#d0b070" stroke-width="0.6"/><rect x="8" y="9" width="9" height="9" fill="#40a0e0" stroke="#e0b030" stroke-width="1.2"/><path d="M2 6 H7 V3.5 L11 7 L7 10.5 V8 H2 Z" fill="#30c030"/></svg>
<svg style="position:absolute;left:208.5px;top:458.5px" width="19.0" height="21" viewBox="0 0 19.0 21"><path d="M2.5 10 L9 4 V7.5 H16 V12.5 H9 V16 Z" fill="#b4b4b4" stroke="#989898" stroke-width="0.6"/></svg>
<svg style="position:absolute;left:233px;top:458.5px" width="19.5" height="21" viewBox="0 0 19.5 21"><path d="M9.5 3 L16 9.5 H12.5 V17 H6.5 V9.5 H3 Z" fill="#b4b4b4" stroke="#989898" stroke-width="0.6"/></svg>
<svg style="position:absolute;left:257.5px;top:458.5px" width="19.0" height="21" viewBox="0 0 19.0 21"><path d="M9.5 17 L16 10.5 H12.5 V3 H6.5 V10.5 H3 Z" fill="#b4b4b4" stroke="#989898" stroke-width="0.6"/></svg>
<svg style="position:absolute;left:282.5px;top:458.5px" width="19.0" height="21" viewBox="0 0 19.0 21"><path d="M16.5 10 L10 4 V7.5 H3 V12.5 H10 V16 Z" fill="#b4b4b4" stroke="#989898" stroke-width="0.6"/></svg>
<svg style="position:absolute;left:307.5px;top:458.5px" width="19.0" height="21" viewBox="0 0 19.0 21"><path d="M5 9 Q6 3.5 11 4.5 Q15.5 6 14.5 11" fill="none" stroke="#b4b4b4" stroke-width="2.4"/><path d="M2 7 L6 4 L8 9 Z" fill="#b4b4b4"/><rect x="6" y="11" width="9" height="6" fill="#c0c0c0" stroke="#a0a0a0" stroke-width="0.5"/></svg>
<svg style="position:absolute;left:328px;top:458.5px" width="19" height="21" viewBox="0 0 19 21"><path d="M14 9 Q13 3.5 8 4.5 Q3.5 6 4.5 11" fill="none" stroke="#b4b4b4" stroke-width="2.4"/><path d="M17 7 L13 4 L11 9 Z" fill="#b4b4b4"/><rect x="4" y="11" width="9" height="6" fill="#c0c0c0" stroke="#a0a0a0" stroke-width="0.5"/></svg>
<svg style="position:absolute;left:353.5px;top:458.5px" width="19.0" height="21" viewBox="0 0 19.0 21"><rect x="7" y="5" width="10" height="9" fill="#40a0e0" stroke="#e0b030" stroke-width="1.3"/><path d="M1.5 8 H6 V5 L10.5 9.5 L6 14 V11 H1.5 Z" fill="#20c020" stroke="#108010" stroke-width="0.4"/></svg>
<svg style="position:absolute;left:375px;top:458.5px" width="19" height="21" viewBox="0 0 19 21"><path d="M3 7.5 H10 V4.5 L16 9.5 L10 14.5 V11.5 H3 Z" fill="#b8b8b8" stroke="#a0a0a0" stroke-width="0.5"/><rect x="2" y="7.5" width="3" height="4" fill="#a8a8a8"/></svg>
<svg style="position:absolute;left:401px;top:458.5px" width="19" height="21" viewBox="0 0 19 21"><rect x="3" y="2.5" width="10" height="8" fill="#e8f4fa" stroke="#7ab0d0" stroke-width="0.6"/><rect x="3" y="2.5" width="10" height="2" fill="#60b8e0"/><rect x="5.5" y="5.5" width="10" height="8" fill="#eef6fa" stroke="#7ab0d0" stroke-width="0.6"/><rect x="5.5" y="5.5" width="10" height="2" fill="#60b8e0"/><rect x="8" y="8.5" width="10" height="8" fill="#f4f8fa" stroke="#7ab0d0" stroke-width="0.6"/><rect x="8" y="8.5" width="10" height="2" fill="#60b8e0"/><path d="M2 12 H6 L7 13 H11 V18 H2 Z" fill="#f0c830" stroke="#b09020" stroke-width="0.5"/></svg>
<svg style="position:absolute;left:422.5px;top:458.5px" width="19.0" height="21" viewBox="0 0 19.0 21"><rect x="3" y="2.5" width="10" height="8" fill="#e8f4fa" stroke="#7ab0d0" stroke-width="0.6"/><rect x="3" y="2.5" width="10" height="2" fill="#60b8e0"/><rect x="5.5" y="5.5" width="10" height="8" fill="#eef6fa" stroke="#7ab0d0" stroke-width="0.6"/><rect x="5.5" y="5.5" width="10" height="2" fill="#60b8e0"/><rect x="8" y="8.5" width="10" height="8" fill="#f4f8fa" stroke="#7ab0d0" stroke-width="0.6"/><rect x="8" y="8.5" width="10" height="2" fill="#60b8e0"/><rect x="2" y="11.5" width="8" height="7" fill="#2040c0"/><rect x="3.5" y="15" width="5" height="2.5" fill="#fff"/><rect x="4" y="16" width="4" height="1" fill="#30b030"/></svg>
<svg style="position:absolute;left:444px;top:458.5px" width="19" height="21" viewBox="0 0 19 21"><rect x="3" y="2.5" width="10" height="8" fill="#e8f4fa" stroke="#7ab0d0" stroke-width="0.6"/><rect x="3" y="2.5" width="10" height="2" fill="#60b8e0"/><rect x="5.5" y="5.5" width="10" height="8" fill="#eef6fa" stroke="#7ab0d0" stroke-width="0.6"/><rect x="5.5" y="5.5" width="10" height="2" fill="#60b8e0"/><rect x="8" y="8.5" width="10" height="8" fill="#f4f8fa" stroke="#7ab0d0" stroke-width="0.6"/><rect x="8" y="8.5" width="10" height="2" fill="#60b8e0"/><path d="M2 12 L8 18 M8 12 L2 18" stroke="#f01010" stroke-width="1.8"/></svg>
<svg style="position:absolute;left:470px;top:458.5px" width="19" height="21" viewBox="0 0 19 21"><rect x="3" y="2.5" width="13" height="15" fill="#d8d8d8" stroke="#a0a0a0" stroke-width="0.6"/><rect x="5" y="4.5" width="9" height="6" fill="#b8b8b8"/><ellipse cx="11" cy="14.5" rx="3.5" ry="1.8" fill="none" stroke="#707070" stroke-width="0.8"/><circle cx="11" cy="14.5" r="0.9" fill="#707070"/><rect x="5" y="14" width="1.5" height="1" fill="#707070"/></svg>
<svg style="position:absolute;left:497.5px;top:458.5px" width="19.0" height="21" viewBox="0 0 19.0 21"><rect x="2.5" y="8" width="9" height="9" fill="#4090e0" stroke="#e0b030" stroke-width="1.2"/><circle cx="12.5" cy="6.5" r="4.8" fill="#2080e0" stroke="#1060b0" stroke-width="0.5"/><rect x="12" y="5.5" width="1.2" height="3.5" fill="#fff"/><circle cx="12.6" cy="4" r="0.7" fill="#fff"/></svg>
<svg style="position:absolute;left:525px;top:458.5px" width="34" height="21" viewBox="0 0 34 21"><path d="M5 8 H8 L12 3 V18 L8 13 H5 Z" fill="#a08030" stroke="#605020" stroke-width="0.5"/><ellipse cx="6" cy="10.5" rx="2" ry="3" fill="#606060"/><path d="M15 6 Q17 10 15 14 M18 5 Q21 10 18 15" stroke="#4090e0" stroke-width="1.2" fill="none"/><path d="M20 12 L23 16 L31 7" stroke="#20b020" stroke-width="2" fill="none"/></svg>
<svg style="position:absolute;left:562.5px;top:458.5px" width="34.0" height="21" viewBox="0 0 34.0 21"><path d="M5 9 L9 13 L17 5" stroke="#30c030" stroke-width="2.2" fill="none"/><path d="M9 11 L13 15 L22 6" stroke="#30c030" stroke-width="2.2" fill="none"/><path d="M13 13 L17 17 L27 7" stroke="#30c030" stroke-width="2.2" fill="none"/></svg>
</body></html>
